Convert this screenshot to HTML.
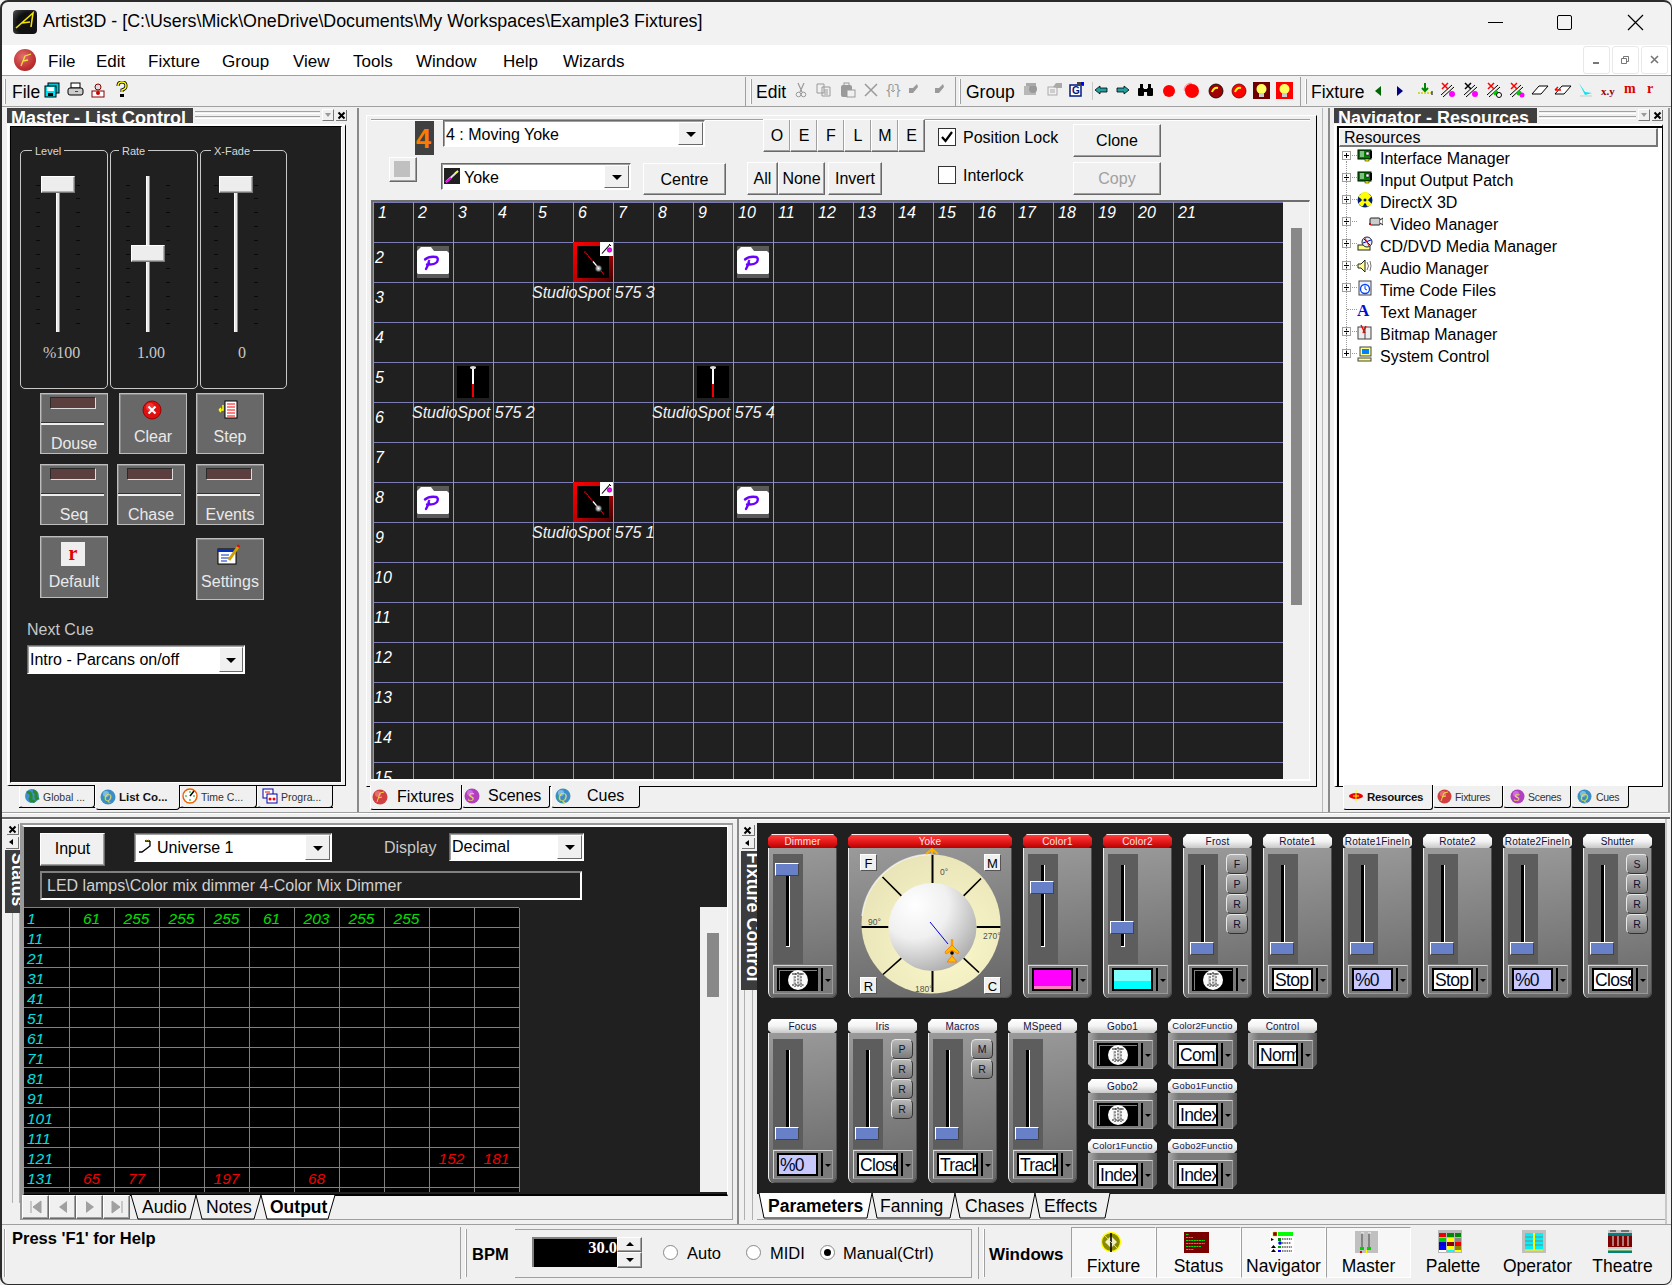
<!DOCTYPE html>
<html><head><meta charset="utf-8">
<style>
*{box-sizing:border-box;margin:0;padding:0}
html,body{width:1672px;height:1285px;overflow:hidden;background:#f0f0f0;font-family:"Liberation Sans",sans-serif;color:#000}
.a{position:absolute}
.t{position:absolute;white-space:nowrap;line-height:1}
.dk{background:#202020}
.sunk{border-top:1px solid #a0a0a0;border-left:1px solid #a0a0a0;border-bottom:1px solid #fff;border-right:1px solid #fff}
.btn{position:absolute;background:#f0f0f0;border-top:1px solid #fff;border-left:1px solid #fff;border-right:1px solid #696969;border-bottom:1px solid #696969;box-shadow:inset -1px -1px 0 #a0a0a0}
.combo{position:absolute;background:#fff;border-top:1px solid #696969;border-left:1px solid #696969;border-bottom:1px solid #fff;border-right:1px solid #fff;box-shadow:inset 1px 1px 0 #a0a0a0}
.cbtn{position:absolute;top:1px;bottom:1px;right:1px;width:17px;background:#f0f0f0;border-top:1px solid #fff;border-left:1px solid #fff;border-right:1px solid #696969;border-bottom:1px solid #696969}
.cbtn:after{content:"";position:absolute;left:50%;top:50%;margin-left:-5px;margin-top:-2px;border-left:5px solid transparent;border-right:5px solid transparent;border-top:5px solid #000}
.ptitle{position:absolute;background:#3f3f3f;color:#fff;font-weight:bold;font-size:17px;overflow:hidden;height:15px;line-height:20px;padding-left:4px}
</style></head><body>
<!-- window border -->
<div class="a" style="left:0;top:0;width:1672px;height:1285px;border:2px solid #2b2b2b;border-right-width:1px;border-bottom-width:1px;border-radius:8px 8px 8px 8px;pointer-events:none;z-index:50"></div>

<!-- TITLE BAR -->
<div class="a" id="titlebar" style="left:0;top:0;width:1672px;height:45px;background:#f2f2f2">
 <div class="a" style="left:13px;top:10px;width:24px;height:24px;border-radius:4px;background:radial-gradient(circle at 65% 60%,#111 55%,#555 100%)"></div>
 <svg class="a" style="left:13px;top:10px" width="24" height="24"><path d="M3 18 L20 3 L18 17 M9 13 L17 12" stroke="#f5e400" stroke-width="1.6" fill="none"/></svg>
 <div class="t" style="left:43px;top:13px;font-size:17.84px;color:#000">Artist3D - [C:\Users\Mick\OneDrive\Documents\My Workspaces\Example3 Fixtures]</div>
 <div class="a" style="left:1488px;top:22px;width:15px;height:1px;background:#000"></div>
 <div class="a" style="left:1557px;top:15px;width:15px;height:15px;border:1.5px solid #000;border-radius:2px"></div>
 <svg class="a" style="left:1627px;top:14px" width="17" height="17"><path d="M1 1 L16 16 M16 1 L1 16" stroke="#000" stroke-width="1.2"/></svg>
</div>

<!-- MENU BAR -->
<div class="a" id="menubar" style="left:0;top:45px;width:1672px;height:31px;background:#fff;border-bottom:1px solid #a0a0a0">
 <div class="a" style="left:14px;top:4px;width:22px;height:22px;border-radius:50%;background:radial-gradient(circle at 40% 35%,#e07070,#c03030 60%,#902020)"></div>
 <svg class="a" style="left:14px;top:4px" width="22" height="22"><path d="M7 17 L11 7 L17 5 M9 12 L14 11" stroke="#f0e040" stroke-width="1.3" fill="none"/></svg>
 <div class="t" style="left:48px;top:8px;font-size:17px">File</div>
 <div class="t" style="left:96px;top:8px;font-size:17px">Edit</div>
 <div class="t" style="left:148px;top:8px;font-size:17px">Fixture</div>
 <div class="t" style="left:222px;top:8px;font-size:17px">Group</div>
 <div class="t" style="left:293px;top:8px;font-size:17px">View</div>
 <div class="t" style="left:353px;top:8px;font-size:17px">Tools</div>
 <div class="t" style="left:416px;top:8px;font-size:17px">Window</div>
 <div class="t" style="left:503px;top:8px;font-size:17px">Help</div>
 <div class="t" style="left:563px;top:8px;font-size:17px">Wizards</div>
 <div class="a" style="left:1583px;top:1px;width:27px;height:28px;border:1px solid #e8e8e8;border-radius:3px"></div>
 <div class="a" style="left:1612px;top:1px;width:27px;height:28px;border:1px solid #e8e8e8;border-radius:3px"></div>
 <div class="a" style="left:1641px;top:1px;width:27px;height:28px;border:1px solid #e8e8e8;border-radius:3px"></div>
 <div class="a" style="left:1593px;top:17px;width:6px;height:2px;background:#777"></div>
 <svg class="a" style="left:1620px;top:10px" width="10" height="10"><path d="M1.5 3.5h5v5h-5z M3.5 3.5v-2h5v5h-2" stroke="#777" fill="none"/></svg>
 <svg class="a" style="left:1650px;top:10px" width="10" height="10"><path d="M1 1L8 8M8 1L1 8" stroke="#777" stroke-width="1.6"/></svg>
</div>

<!-- TOOLBAR -->
<div class="a" id="toolbar" style="left:0;top:76px;width:1672px;height:31px;background:#f0f0f0;border-bottom:1px solid #a0a0a0">
 <div class="a" style="left:4px;top:3px;width:2px;height:25px;border-left:1px solid #fff;border-right:1px solid #a0a0a0"></div>
 <div class="t" style="left:12px;top:8px;font-size:17.5px">File</div>
 <svg class="a" style="left:44px;top:6px" width="16" height="16"><rect x="4" y="1" width="11" height="10" fill="#00c8d8" stroke="#000"/><rect x="1" y="4" width="11" height="11" fill="#00e0f0" stroke="#000"/><rect x="3" y="5" width="7" height="4" fill="#fff"/><rect x="4" y="11" width="5" height="3" fill="#000"/></svg>
 <svg class="a" style="left:67px;top:6px" width="17" height="15"><rect x="4" y="1" width="9" height="5" fill="#fff" stroke="#000"/><rect x="1" y="6" width="15" height="7" rx="2" fill="#ccc" stroke="#000"/><rect x="8" y="9" width="3" height="1" fill="#e00"/></svg>
 <svg class="a" style="left:91px;top:6px" width="14" height="16"><circle cx="7" cy="5" r="3" fill="#ddd" stroke="#800"/><rect x="1" y="9" width="12" height="6" fill="#fff" stroke="#800"/><circle cx="7" cy="11" r="2" fill="#c00"/></svg>
 <svg class="a" style="left:115px;top:5px" width="13" height="17"><path d="M3 5 Q3 1 7 1 Q11 1 11 5 Q11 8 7 9 L7 11" stroke="#000" stroke-width="3" fill="none"/><path d="M3 5 Q3 1 7 1 Q11 1 11 5 Q11 8 7 9 L7 11" stroke="#ff0" stroke-width="1.5" fill="none"/><rect x="5" y="13" width="4" height="3" fill="#000"/></svg>

 <div class="a" style="left:745px;top:1px;width:1px;height:29px;background:#a0a0a0"></div>
 <div class="a" style="left:750px;top:3px;width:2px;height:25px;border-left:1px solid #fff;border-right:1px solid #a0a0a0"></div>
 <div class="t" style="left:756px;top:8px;font-size:17.5px">Edit</div>
 <svg class="a" style="left:795px;top:6px" width="12" height="16"><path d="M3 1 L7 10 M9 1 L5 10" stroke="#9a9a9a" stroke-width="1.2"/><circle cx="3.5" cy="12.5" r="2.3" stroke="#9a9a9a" fill="none"/><circle cx="8.5" cy="12.5" r="2.3" stroke="#9a9a9a" fill="none"/></svg>
 <svg class="a" style="left:816px;top:7px" width="16" height="14"><path d="M1 1h7v9h-7z M6 4h8v9h-8z" stroke="#9a9a9a" fill="#f0f0f0"/><path d="M8 7h4M8 9h4M8 11h4" stroke="#9a9a9a"/></svg>
 <svg class="a" style="left:840px;top:6px" width="16" height="16"><rect x="1" y="3" width="11" height="12" rx="2" fill="#9a9a9a"/><rect x="4" y="1" width="5" height="3" fill="none" stroke="#9a9a9a"/><rect x="7" y="8" width="8" height="7" fill="#f0f0f0" stroke="#9a9a9a"/></svg>
 <svg class="a" style="left:864px;top:7px" width="14" height="14"><path d="M1 1L13 13M13 1L1 13" stroke="#9a9a9a" stroke-width="1.5"/></svg>
 <svg class="a" style="left:885px;top:6px" width="16" height="15"><text x="0" y="13" font-size="14" fill="#9a9a9a" font-family="Liberation Mono">{}</text><path d="M8 3v7M6 8l2 2 2-2" stroke="#9a9a9a" fill="none"/></svg>
 <svg class="a" style="left:907px;top:7px" width="12" height="12"><path d="M2 10 L2 5 L6 5 L10 1 L11 4 L6 10z" fill="#9a9a9a"/></svg>
 <svg class="a" style="left:933px;top:7px" width="12" height="12"><path d="M2 10 L2 5 L6 5 L10 1 L11 4 L6 10z" fill="#9a9a9a"/></svg>

 <div class="a" style="left:955px;top:1px;width:1px;height:29px;background:#a0a0a0"></div>
 <div class="a" style="left:959px;top:3px;width:2px;height:25px;border-left:1px solid #fff;border-right:1px solid #a0a0a0"></div>
 <div class="t" style="left:966px;top:8px;font-size:17.5px">Group</div>
 <svg class="a" style="left:1023px;top:6px" width="16" height="14"><rect x="1" y="4" width="12" height="9" fill="#b8b8b8"/><circle cx="10" cy="7" r="4" fill="#999"/><rect x="3" y="1" width="10" height="3" fill="#aaa"/></svg>
 <svg class="a" style="left:1047px;top:6px" width="16" height="14"><rect x="1" y="5" width="9" height="8" fill="#f0f0f0" stroke="#aaa"/><path d="M6 5 L9 1 L15 1 L15 6 L10 6" fill="#aaa"/><path d="M3 8h5M3 10h5" stroke="#aaa"/></svg>
 <svg class="a" style="left:1069px;top:5px" width="16" height="16"><rect x="1" y="4" width="11" height="11" fill="#fff" stroke="#001a80" stroke-width="1.5"/><text x="3" y="13" font-size="10" font-weight="bold" fill="#001a80" font-family="Liberation Sans">G</text><rect x="8" y="1" width="7" height="4" fill="#444"/><rect x="12" y="1" width="3" height="3" fill="#00f"/></svg>
 <div class="a" style="left:1092px;top:6px;width:1px;height:18px;background:#c8c8c8"></div>
 <svg class="a" style="left:1094px;top:9px" width="14" height="10"><path d="M1 5 L6 1 L6 3 L13 3 L13 7 L6 7 L6 9z" fill="#20a0a0" stroke="#000" stroke-width="0.8"/></svg>
 <svg class="a" style="left:1116px;top:9px" width="14" height="10"><path d="M13 5 L8 1 L8 3 L1 3 L1 7 L8 7 L8 9z" fill="#20a0a0" stroke="#000" stroke-width="0.8"/></svg>
 <svg class="a" style="left:1137px;top:7px" width="17" height="14"><rect x="1" y="5" width="6" height="8" rx="1" fill="#000"/><rect x="10" y="5" width="6" height="8" rx="1" fill="#000"/><rect x="3" y="1" width="3" height="5" fill="#000"/><rect x="11" y="1" width="3" height="5" fill="#000"/><rect x="6" y="6" width="5" height="3" fill="#000"/></svg>
 <svg class="a" style="left:1162px;top:8px" width="14" height="14"><circle cx="7" cy="7" r="6" fill="#f00"/></svg>
 <svg class="a" style="left:1183px;top:6px" width="17" height="17"><circle cx="9" cy="9" r="7" fill="#f00"/><path d="M2 9 A7 7 0 0 1 9 2" stroke="#f00" fill="none"/><path d="M1 8 A8 8 0 0 1 8 1" stroke="#f88" fill="none"/></svg>
 <svg class="a" style="left:1208px;top:7px" width="16" height="16"><circle cx="8" cy="8" r="7" fill="#a00000" stroke="#000" stroke-width="0.8"/><path d="M4 9 Q6 4 10 5" stroke="#ff0" stroke-width="2" fill="none"/></svg>
 <svg class="a" style="left:1231px;top:7px" width="16" height="16"><circle cx="8" cy="8" r="7" fill="#f00" stroke="#600" stroke-width="0.8"/><path d="M4 9 Q6 4 10 5" stroke="#ff0" stroke-width="2" fill="none"/></svg>
 <svg class="a" style="left:1253px;top:6px" width="17" height="17"><rect width="17" height="17" fill="#700000"/><circle cx="8.5" cy="7" r="5" fill="#ffff60"/><rect x="6" y="11" width="5" height="4" fill="#ccc"/></svg>
 <svg class="a" style="left:1276px;top:6px" width="17" height="17"><rect width="17" height="17" fill="#f00"/><circle cx="8.5" cy="7" r="5" fill="#ffff60"/><rect x="6" y="11" width="5" height="4" fill="#ccc"/></svg>

 <div class="a" style="left:1300px;top:1px;width:1px;height:29px;background:#a0a0a0"></div>
 <div class="a" style="left:1305px;top:3px;width:2px;height:25px;border-left:1px solid #fff;border-right:1px solid #a0a0a0"></div>
 <div class="t" style="left:1311px;top:8px;font-size:17.5px">Fixture</div>
 <svg class="a" style="left:1374px;top:9px" width="8" height="12"><path d="M7 1 L1 6 L7 11z" fill="#006600"/></svg>
 <svg class="a" style="left:1396px;top:9px" width="8" height="12"><path d="M1 1 L7 6 L1 11z" fill="#000080"/></svg>
 <svg class="a" style="left:1417px;top:6px" width="16" height="16"><path d="M8 1v8M5 6l3 3 3-3" stroke="#080" stroke-width="2" fill="none"/><path d="M1 11h14" stroke="#cc0" stroke-dasharray="2 1" stroke-width="1.5"/><path d="M15 9v4" stroke="#000"/></svg>
 <svg class="a" style="left:1440px;top:6px" width="16" height="16"><path d="M1 13L12 3M3 15L14 5" stroke="#000"/><path d="M2 1L8 7M8 1L2 7" stroke="#f00" stroke-width="1.5"/><circle cx="12" cy="12" r="3" fill="#f0f"/></svg>
 <svg class="a" style="left:1463px;top:6px" width="16" height="16"><path d="M1 13L12 3M3 15L14 5" stroke="#000"/><path d="M2 1L8 7M8 1L2 7" stroke="#000" stroke-width="1.5"/><circle cx="12" cy="12" r="3" fill="#f0f"/></svg>
 <svg class="a" style="left:1486px;top:6px" width="16" height="16"><path d="M1 13L12 3M3 15L14 5" stroke="#000"/><path d="M2 1L8 7M8 1L2 7" stroke="#f00" stroke-width="1.5"/><circle cx="10" cy="11" r="2.5" fill="#0c0"/><circle cx="13" cy="13" r="2.5" fill="#fff" stroke="#000"/></svg>
 <svg class="a" style="left:1509px;top:6px" width="16" height="16"><path d="M1 13L12 3M3 15L14 5" stroke="#000"/><path d="M2 1L8 7M8 1L2 7" stroke="#f00" stroke-width="1.5"/><circle cx="10" cy="11" r="2.5" fill="#0c0"/><circle cx="13" cy="13" r="2.5" fill="#f0f"/></svg>
 <svg class="a" style="left:1531px;top:8px" width="18" height="12"><path d="M1 10 L8 2 L17 2 L10 10z" fill="#fff" stroke="#000"/></svg>
 <svg class="a" style="left:1554px;top:8px" width="18" height="12"><path d="M1 10 L8 2 L17 2 L10 10z" fill="#fff" stroke="#000"/><path d="M1 6h6M1 6l3-3" stroke="#f00" stroke-width="1.5"/></svg>
 <svg class="a" style="left:1578px;top:6px" width="15" height="16"><path d="M1 1 L7 10 L14 11 L7 13z" fill="#00e8f0"/><rect x="2" y="13" width="12" height="2" fill="#ddd"/></svg>
 <div class="t" style="left:1601px;top:10px;font-size:11px;font-weight:bold;color:#900;font-family:'Liberation Serif'">x.y</div>
 <div class="t" style="left:1624px;top:6px;font-size:14px;font-weight:bold;color:#d00;font-family:'Liberation Serif'">m</div>
 <div class="t" style="left:1647px;top:6px;font-size:14px;font-weight:bold;color:#d00;font-family:'Liberation Serif'">r</div>
</div>

<!-- LEFT PANEL -->
<div class="ptitle" style="left:7px;top:108px;width:186px;font-size:18px">Master - List Control</div>
<div class="a" style="left:195px;top:111px;width:125px;height:3px;border-top:1px solid #a0a0a0;border-bottom:1px solid #fff"></div>
<div class="a" style="left:195px;top:116px;width:125px;height:3px;border-top:1px solid #a0a0a0;border-bottom:1px solid #fff"></div>
<div class="a" style="left:322px;top:109px;width:12px;height:12px;background:#f0f0f0;border-top:1px solid #fff;border-left:1px solid #fff;border-right:1px solid #777;border-bottom:1px solid #777"><div class="a" style="left:2px;top:3px;border-left:3px solid transparent;border-right:3px solid transparent;border-top:4px solid #999"></div></div>
<div class="a" style="left:336px;top:110px;width:11px;height:11px;background:#f0f0f0;border-right:1px solid #777;border-bottom:1px solid #777"><svg class="a" style="left:1px;top:1px" width="9" height="9"><path d="M1.5 1.5L7.5 7.5M7.5 1.5L1.5 7.5" stroke="#000" stroke-width="2"/></svg></div>
<div class="a" style="left:7px;top:124px;width:339px;height:662px;border-top:2px solid #fff;border-left:2px solid #fff;border-right:1px solid #000;border-bottom:1px solid #000"></div>
<div class="a dk" style="left:10px;top:126px;width:332px;height:657px;border-top:1px solid #000;border-left:1px solid #000;border-right:1px solid #fff;border-bottom:1px solid #fff"></div>
<div class="a" style="left:20px;top:150px;width:88px;height:239px;border:1px solid #c8c8c8;border-radius:5px"></div>
 <div class="t" style="left:32px;top:144px;padding:0 3px;background:#202020;font-size:11px;color:#d8d8d8;line-height:14px">Level</div>
<div class="a" style="left:110px;top:150px;width:88px;height:239px;border:1px solid #c8c8c8;border-radius:5px"></div>
 <div class="t" style="left:119px;top:144px;padding:0 3px;background:#202020;font-size:11px;color:#d8d8d8;line-height:14px">Rate</div>
<div class="a" style="left:200px;top:150px;width:87px;height:239px;border:1px solid #c8c8c8;border-radius:5px"></div>
 <div class="t" style="left:211px;top:144px;padding:0 3px;background:#202020;font-size:11px;color:#d8d8d8;line-height:14px">X-Fade</div>
<div class="a" style="left:36px;top:185px;width:4px;height:1px;background:#0a0a0a"></div><div class="a" style="left:76px;top:185px;width:4px;height:1px;background:#0a0a0a"></div><div class="a" style="left:36px;top:198px;width:4px;height:1px;background:#0a0a0a"></div><div class="a" style="left:76px;top:198px;width:4px;height:1px;background:#0a0a0a"></div><div class="a" style="left:36px;top:212px;width:4px;height:1px;background:#0a0a0a"></div><div class="a" style="left:76px;top:212px;width:4px;height:1px;background:#0a0a0a"></div><div class="a" style="left:36px;top:226px;width:4px;height:1px;background:#0a0a0a"></div><div class="a" style="left:76px;top:226px;width:4px;height:1px;background:#0a0a0a"></div><div class="a" style="left:36px;top:240px;width:4px;height:1px;background:#0a0a0a"></div><div class="a" style="left:76px;top:240px;width:4px;height:1px;background:#0a0a0a"></div><div class="a" style="left:36px;top:254px;width:4px;height:1px;background:#0a0a0a"></div><div class="a" style="left:76px;top:254px;width:4px;height:1px;background:#0a0a0a"></div><div class="a" style="left:36px;top:268px;width:4px;height:1px;background:#0a0a0a"></div><div class="a" style="left:76px;top:268px;width:4px;height:1px;background:#0a0a0a"></div><div class="a" style="left:36px;top:282px;width:4px;height:1px;background:#0a0a0a"></div><div class="a" style="left:76px;top:282px;width:4px;height:1px;background:#0a0a0a"></div><div class="a" style="left:36px;top:296px;width:4px;height:1px;background:#0a0a0a"></div><div class="a" style="left:76px;top:296px;width:4px;height:1px;background:#0a0a0a"></div><div class="a" style="left:36px;top:309px;width:4px;height:1px;background:#0a0a0a"></div><div class="a" style="left:76px;top:309px;width:4px;height:1px;background:#0a0a0a"></div><div class="a" style="left:36px;top:323px;width:4px;height:1px;background:#0a0a0a"></div><div class="a" style="left:76px;top:323px;width:4px;height:1px;background:#0a0a0a"></div><div class="a" style="left:126px;top:185px;width:4px;height:1px;background:#0a0a0a"></div><div class="a" style="left:166px;top:185px;width:4px;height:1px;background:#0a0a0a"></div><div class="a" style="left:126px;top:198px;width:4px;height:1px;background:#0a0a0a"></div><div class="a" style="left:166px;top:198px;width:4px;height:1px;background:#0a0a0a"></div><div class="a" style="left:126px;top:212px;width:4px;height:1px;background:#0a0a0a"></div><div class="a" style="left:166px;top:212px;width:4px;height:1px;background:#0a0a0a"></div><div class="a" style="left:126px;top:226px;width:4px;height:1px;background:#0a0a0a"></div><div class="a" style="left:166px;top:226px;width:4px;height:1px;background:#0a0a0a"></div><div class="a" style="left:126px;top:240px;width:4px;height:1px;background:#0a0a0a"></div><div class="a" style="left:166px;top:240px;width:4px;height:1px;background:#0a0a0a"></div><div class="a" style="left:126px;top:254px;width:4px;height:1px;background:#0a0a0a"></div><div class="a" style="left:166px;top:254px;width:4px;height:1px;background:#0a0a0a"></div><div class="a" style="left:126px;top:268px;width:4px;height:1px;background:#0a0a0a"></div><div class="a" style="left:166px;top:268px;width:4px;height:1px;background:#0a0a0a"></div><div class="a" style="left:126px;top:282px;width:4px;height:1px;background:#0a0a0a"></div><div class="a" style="left:166px;top:282px;width:4px;height:1px;background:#0a0a0a"></div><div class="a" style="left:126px;top:296px;width:4px;height:1px;background:#0a0a0a"></div><div class="a" style="left:166px;top:296px;width:4px;height:1px;background:#0a0a0a"></div><div class="a" style="left:126px;top:309px;width:4px;height:1px;background:#0a0a0a"></div><div class="a" style="left:166px;top:309px;width:4px;height:1px;background:#0a0a0a"></div><div class="a" style="left:126px;top:323px;width:4px;height:1px;background:#0a0a0a"></div><div class="a" style="left:166px;top:323px;width:4px;height:1px;background:#0a0a0a"></div><div class="a" style="left:214px;top:185px;width:4px;height:1px;background:#0a0a0a"></div><div class="a" style="left:254px;top:185px;width:4px;height:1px;background:#0a0a0a"></div><div class="a" style="left:214px;top:198px;width:4px;height:1px;background:#0a0a0a"></div><div class="a" style="left:254px;top:198px;width:4px;height:1px;background:#0a0a0a"></div><div class="a" style="left:214px;top:212px;width:4px;height:1px;background:#0a0a0a"></div><div class="a" style="left:254px;top:212px;width:4px;height:1px;background:#0a0a0a"></div><div class="a" style="left:214px;top:226px;width:4px;height:1px;background:#0a0a0a"></div><div class="a" style="left:254px;top:226px;width:4px;height:1px;background:#0a0a0a"></div><div class="a" style="left:214px;top:240px;width:4px;height:1px;background:#0a0a0a"></div><div class="a" style="left:254px;top:240px;width:4px;height:1px;background:#0a0a0a"></div><div class="a" style="left:214px;top:254px;width:4px;height:1px;background:#0a0a0a"></div><div class="a" style="left:254px;top:254px;width:4px;height:1px;background:#0a0a0a"></div><div class="a" style="left:214px;top:268px;width:4px;height:1px;background:#0a0a0a"></div><div class="a" style="left:254px;top:268px;width:4px;height:1px;background:#0a0a0a"></div><div class="a" style="left:214px;top:282px;width:4px;height:1px;background:#0a0a0a"></div><div class="a" style="left:254px;top:282px;width:4px;height:1px;background:#0a0a0a"></div><div class="a" style="left:214px;top:296px;width:4px;height:1px;background:#0a0a0a"></div><div class="a" style="left:254px;top:296px;width:4px;height:1px;background:#0a0a0a"></div><div class="a" style="left:214px;top:309px;width:4px;height:1px;background:#0a0a0a"></div><div class="a" style="left:254px;top:309px;width:4px;height:1px;background:#0a0a0a"></div><div class="a" style="left:214px;top:323px;width:4px;height:1px;background:#0a0a0a"></div><div class="a" style="left:254px;top:323px;width:4px;height:1px;background:#0a0a0a"></div>
<div class="a" style="left:56px;top:176px;width:4px;height:156px;background:#e8e8e8;border-left:1px solid #fff;border-right:1px solid #888"></div>
 <div class="a" style="left:41px;top:176px;width:34px;height:17px;background:#ededed;border-top:1px solid #fff;border-left:1px solid #fff;border-right:1px solid #777;border-bottom:1px solid #777;box-shadow:inset -1px -1px 0 #b0b0b0"></div>
<div class="a" style="left:146px;top:176px;width:4px;height:156px;background:#e8e8e8;border-left:1px solid #fff;border-right:1px solid #888"></div>
 <div class="a" style="left:131px;top:245px;width:34px;height:17px;background:#ededed;border-top:1px solid #fff;border-left:1px solid #fff;border-right:1px solid #777;border-bottom:1px solid #777;box-shadow:inset -1px -1px 0 #b0b0b0"></div>
<div class="a" style="left:234px;top:176px;width:4px;height:156px;background:#e8e8e8;border-left:1px solid #fff;border-right:1px solid #888"></div>
 <div class="a" style="left:219px;top:176px;width:34px;height:17px;background:#ededed;border-top:1px solid #fff;border-left:1px solid #fff;border-right:1px solid #777;border-bottom:1px solid #777;box-shadow:inset -1px -1px 0 #b0b0b0"></div>
<div class="t" style="left:43px;top:345px;font-size:16px;color:#c8c8c8;font-family:'Liberation Serif'">%100</div>
<div class="t" style="left:137px;top:345px;font-size:16px;color:#c8c8c8;font-family:'Liberation Serif'">1.00</div>
<div class="t" style="left:238px;top:345px;font-size:16px;color:#c8c8c8;font-family:'Liberation Serif'">0</div>
<div class="a" style="left:40px;top:393px;width:68px;height:61px;background:#686868;border:1px solid #bdbdbd;box-shadow:inset 1px 1px 0 #8a8a8a"><div class="a" style="left:9px;top:3px;width:46px;height:12px;background:#5b3e3e;border-top:1px solid #2a2a2a;border-left:1px solid #2a2a2a;border-right:1px solid #ddd;border-bottom:1px solid #ddd"></div><div class="a" style="left:0;top:28px;width:63px;height:3px;border-top:1px solid #333;border-bottom:2px solid #eee"></div>
  <div class="t" style="left:0;width:66px;text-align:center;top:42px;font-size:16px;color:#eaeaea">Douse</div></div>
<div class="a" style="left:119px;top:393px;width:68px;height:61px;background:#686868;border:1px solid #bdbdbd;box-shadow:inset 1px 1px 0 #8a8a8a"><svg class="a" style="left:22px;top:6px" width="20" height="20"><circle cx="10" cy="10" r="9" fill="#e01010" stroke="#900"/><circle cx="8" cy="7" r="4" fill="#ff6060" opacity=".5"/><path d="M6.5 6.5L13.5 13.5M13.5 6.5L6.5 13.5" stroke="#fff" stroke-width="2.2"/></svg>
  <div class="t" style="left:0;width:66px;text-align:center;top:35px;font-size:16px;color:#eaeaea">Clear</div></div>
<div class="a" style="left:196px;top:393px;width:68px;height:61px;background:#686868;border:1px solid #bdbdbd;box-shadow:inset 1px 1px 0 #8a8a8a"><svg class="a" style="left:20px;top:6px" width="24" height="20"><rect x="8" y="1" width="12" height="17" fill="#fff" stroke="#000"/><path d="M10 4h8M10 7h8M10 10h8M10 13h8M10 16h8" stroke="#f00"/><path d="M6 5v5H2M2 10l2-2M2 10l2 2" stroke="#ff0" stroke-width="1.5" fill="none"/></svg>
  <div class="t" style="left:0;width:66px;text-align:center;top:35px;font-size:16px;color:#eaeaea">Step</div></div>
<div class="a" style="left:40px;top:464px;width:68px;height:61px;background:#686868;border:1px solid #bdbdbd;box-shadow:inset 1px 1px 0 #8a8a8a"><div class="a" style="left:9px;top:3px;width:46px;height:12px;background:#5b3e3e;border-top:1px solid #2a2a2a;border-left:1px solid #2a2a2a;border-right:1px solid #ddd;border-bottom:1px solid #ddd"></div><div class="a" style="left:0;top:28px;width:63px;height:3px;border-top:1px solid #333;border-bottom:2px solid #eee"></div>
  <div class="t" style="left:0;width:66px;text-align:center;top:42px;font-size:16px;color:#eaeaea">Seq</div></div>
<div class="a" style="left:117px;top:464px;width:68px;height:61px;background:#686868;border:1px solid #bdbdbd;box-shadow:inset 1px 1px 0 #8a8a8a"><div class="a" style="left:9px;top:3px;width:46px;height:12px;background:#5b3e3e;border-top:1px solid #2a2a2a;border-left:1px solid #2a2a2a;border-right:1px solid #ddd;border-bottom:1px solid #ddd"></div><div class="a" style="left:0;top:28px;width:63px;height:3px;border-top:1px solid #333;border-bottom:2px solid #eee"></div>
  <div class="t" style="left:0;width:66px;text-align:center;top:42px;font-size:16px;color:#eaeaea">Chase</div></div>
<div class="a" style="left:196px;top:464px;width:68px;height:61px;background:#686868;border:1px solid #bdbdbd;box-shadow:inset 1px 1px 0 #8a8a8a"><div class="a" style="left:9px;top:3px;width:46px;height:12px;background:#5b3e3e;border-top:1px solid #2a2a2a;border-left:1px solid #2a2a2a;border-right:1px solid #ddd;border-bottom:1px solid #ddd"></div><div class="a" style="left:0;top:28px;width:63px;height:3px;border-top:1px solid #333;border-bottom:2px solid #eee"></div>
  <div class="t" style="left:0;width:66px;text-align:center;top:42px;font-size:16px;color:#eaeaea">Events</div></div>
<div class="a" style="left:40px;top:536px;width:68px;height:62px;background:#686868;border:1px solid #bdbdbd;box-shadow:inset 1px 1px 0 #8a8a8a"><div class="a" style="left:20px;top:5px;width:24px;height:24px;background:#eee"></div><div class="t" style="left:20px;width:24px;text-align:center;top:6px;font-family:'Liberation Serif';font-weight:bold;font-size:20px;color:#e00000">r</div>
  <div class="t" style="left:0;width:66px;text-align:center;top:37px;font-size:16px;color:#eaeaea">Default</div></div>
<div class="a" style="left:196px;top:538px;width:68px;height:62px;background:#686868;border:1px solid #bdbdbd;box-shadow:inset 1px 1px 0 #8a8a8a"><svg class="a" style="left:20px;top:5px" width="24" height="22"><rect x="1" y="5" width="18" height="15" fill="#fff" stroke="#000"/><rect x="1" y="5" width="18" height="3" fill="#0030c0"/><path d="M4 11h8M4 14h10M4 17h6" stroke="#0030c0"/><path d="M12 16L21 3" stroke="#d0a000" stroke-width="3"/><path d="M21 3l1-2" stroke="#f00" stroke-width="3"/></svg>
  <div class="t" style="left:0;width:66px;text-align:center;top:35px;font-size:16px;color:#eaeaea">Settings</div></div>
<div class="t" style="left:27px;top:622px;font-size:16px;color:#c8c8c8">Next Cue</div>
<div class="combo" style="left:27px;top:645px;width:218px;height:29px"><div class="t" style="left:2px;top:6px;font-size:16px">Intro - Parcans on/off</div><div class="cbtn" style="width:24px"></div></div>
<!-- left tabs -->
<div class="a" style="left:19px;top:785px;width:314px;height:23px;border-bottom:1px solid #000"></div>
<div class="a" style="left:19px;top:786px;width:76px;height:22px;background:#f0f0f0;border-left:1px solid #fff;border-right:1px solid #000;border-bottom:1px solid #000;border-radius:0 0 4px 4px"></div>
<div class="a" style="left:180px;top:786px;width:77px;height:22px;background:#f0f0f0;border-left:1px solid #fff;border-right:1px solid #000;border-bottom:1px solid #000;border-radius:0 0 4px 4px"></div>
<div class="a" style="left:257px;top:786px;width:76px;height:22px;background:#f0f0f0;border-left:1px solid #fff;border-right:1px solid #000;border-bottom:1px solid #000;border-radius:0 0 4px 4px"></div>
<div class="a" style="left:95px;top:785px;width:85px;height:25px;background:#f0f0f0;border-left:1px solid #fff;border-right:1px solid #000;border-bottom:1px solid #000;border-radius:0 0 4px 4px"></div>
<svg class="a" style="left:24px;top:788px" width="16" height="16"><circle cx="8" cy="8" r="7" fill="#3a90d0"/><path d="M3 5q3-2 4 2t-2 5M9 3q4 1 3 5t3 2M6 13q3-1 5 1" stroke="#2a8a2a" stroke-width="3" fill="none"/></svg>
<div class="t" style="left:43px;top:792px;font-size:10.5px;color:#333">Global ...</div>
<svg class="a" style="left:100px;top:789px" width="16" height="16"><circle cx="8" cy="8" r="7.5" fill="#3a8ec8"/><circle cx="6" cy="5" r="3" fill="#9cd0f0" opacity=".7"/><text x="4" y="12" font-size="10" fill="#e8e040" font-style="italic" font-family="Liberation Serif">Q</text></svg>
<div class="t" style="left:119px;top:792px;font-size:11.5px;font-weight:bold;color:#111">List Co...</div>
<svg class="a" style="left:182px;top:788px" width="16" height="16"><circle cx="8" cy="8" r="7" fill="#fff" stroke="#f06000" stroke-width="1.4"/><path d="M8 3v10M3 8h10" stroke="#0a0" stroke-dasharray="2 6"/><path d="M8 8L12 3" stroke="#000" stroke-width="1.5"/></svg>
<div class="t" style="left:201px;top:792px;font-size:10.5px;color:#333">Time C...</div>
<svg class="a" style="left:262px;top:788px" width="16" height="16"><rect x="1" y="1" width="10" height="9" fill="#fff" stroke="#00a"/><rect x="5" y="6" width="10" height="9" fill="#fff" stroke="#00a"/><circle cx="8" cy="11" r="1.5" fill="#f00"/><circle cx="12" cy="11" r="1.5" fill="#f00"/><path d="M3 4h5" stroke="#f00"/></svg>
<div class="t" style="left:281px;top:792px;font-size:10.5px;color:#333">Progra...</div>


<!-- CENTER PANEL -->
<div class="a" style="left:357px;top:108px;width:2px;height:704px;background:#8a8a8a"></div>
<div class="a" style="left:366px;top:115px;width:951px;height:672px;border-top:1px solid #fff;border-left:1px solid #fff;border-right:1px solid #000;border-bottom:1px solid #000"></div>
<div class="a" style="left:371px;top:119px;width:939px;height:2px;border-top:1px solid #a0a0a0;border-bottom:1px solid #fff"></div>

<div class="a" style="left:415px;top:121px;width:19px;height:34px;background:#404040"></div>
<div class="t" style="left:416px;top:126px;font-size:27px;font-weight:bold;color:#ff7a00">4</div>
<div class="btn" style="left:389px;top:157px;width:28px;height:25px"><div class="a" style="left:4px;top:3px;width:16px;height:16px;background:#c0c0c0"></div></div>
<div class="combo" style="left:443px;top:120px;width:262px;height:27px"><div class="t" style="left:2px;top:6px;font-size:16px">4 : Moving Yoke</div><div class="cbtn" style="width:25px"></div></div>
<div class="combo" style="left:441px;top:163px;width:190px;height:27px"><div class="a" style="left:2px;top:4px;width:16px;height:16px;background:#202020"></div><svg class="a" style="left:2px;top:4px" width="16" height="16"><path d="M2 14 L14 3" stroke="#e0e0e0" stroke-width="2"/><path d="M2 14 L7 10" stroke="#f0f" stroke-width="2"/><path d="M11 5 L14 3" stroke="#ff0" stroke-width="1.5"/></svg><div class="t" style="left:22px;top:6px;font-size:16px">Yoke</div><div class="cbtn" style="width:25px"></div></div>
<div class="btn" style="left:643px;top:163px;width:83px;height:32px"><div class="t" style="left:0;width:81px;text-align:center;top:8px;font-size:16px;color:#000">Centre</div></div>
<div class="btn" style="left:763px;top:119px;width:28px;height:33px"><div class="t" style="left:0;width:26px;text-align:center;top:8px;font-size:16px;color:#000">O</div></div><div class="btn" style="left:790px;top:119px;width:28px;height:33px"><div class="t" style="left:0;width:26px;text-align:center;top:8px;font-size:16px;color:#000">E</div></div><div class="btn" style="left:817px;top:119px;width:28px;height:33px"><div class="t" style="left:0;width:26px;text-align:center;top:8px;font-size:16px;color:#000">F</div></div><div class="btn" style="left:844px;top:119px;width:28px;height:33px"><div class="t" style="left:0;width:26px;text-align:center;top:8px;font-size:16px;color:#000">L</div></div><div class="btn" style="left:871px;top:119px;width:28px;height:33px"><div class="t" style="left:0;width:26px;text-align:center;top:8px;font-size:16px;color:#000">M</div></div><div class="btn" style="left:898px;top:119px;width:27px;height:33px"><div class="t" style="left:0;width:25px;text-align:center;top:8px;font-size:16px;color:#000">E</div></div>
<div class="btn" style="left:747px;top:162px;width:31px;height:33px"><div class="t" style="left:0;width:29px;text-align:center;top:8px;font-size:16px;color:#000">All</div></div><div class="btn" style="left:778px;top:162px;width:47px;height:33px"><div class="t" style="left:0;width:45px;text-align:center;top:8px;font-size:16px;color:#000">None</div></div><div class="btn" style="left:828px;top:162px;width:54px;height:33px"><div class="t" style="left:0;width:52px;text-align:center;top:8px;font-size:16px;color:#000">Invert</div></div>
<div class="a" style="left:938px;top:128px;width:18px;height:18px;background:#fff;border:1px solid #333"><svg class="a" style="left:1px;top:1px" width="14" height="14"><path d="M2 7 L5.5 11 L12 2" stroke="#000" stroke-width="2.2" fill="none"/></svg></div>
<div class="t" style="left:963px;top:130px;font-size:16px">Position Lock</div>
<div class="a" style="left:938px;top:166px;width:18px;height:18px;background:#fff;border:1px solid #333"></div>
<div class="t" style="left:963px;top:168px;font-size:16px">Interlock</div>
<div class="btn" style="left:1073px;top:124px;width:88px;height:33px"><div class="t" style="left:0;width:86px;text-align:center;top:8px;font-size:16px;color:#000">Clone</div></div>
<div class="btn" style="left:1073px;top:162px;width:88px;height:33px"><div class="t" style="left:0;width:86px;text-align:center;top:8px;font-size:16px;color:#a0a0a0">Copy</div></div>
<!-- grid -->
<div class="a" style="left:371px;top:200px;width:912px;height:579px;border-top:2px solid #6e6e6e;border-left:2px solid #6e6e6e;background:#202020"></div>
<div class="a" style="left:0;top:0;width:1283px;height:779px;overflow:hidden">
<div class="a" style="left:373px;top:202px;width:910px;height:1px;background:#7c7cb4"></div><div class="a" style="left:373px;top:242px;width:910px;height:1px;background:#7c7cb4"></div><div class="a" style="left:373px;top:282px;width:910px;height:1px;background:#7c7cb4"></div><div class="a" style="left:373px;top:322px;width:910px;height:1px;background:#7c7cb4"></div><div class="a" style="left:373px;top:362px;width:910px;height:1px;background:#7c7cb4"></div><div class="a" style="left:373px;top:402px;width:910px;height:1px;background:#7c7cb4"></div><div class="a" style="left:373px;top:442px;width:910px;height:1px;background:#7c7cb4"></div><div class="a" style="left:373px;top:482px;width:910px;height:1px;background:#7c7cb4"></div><div class="a" style="left:373px;top:522px;width:910px;height:1px;background:#7c7cb4"></div><div class="a" style="left:373px;top:562px;width:910px;height:1px;background:#7c7cb4"></div><div class="a" style="left:373px;top:602px;width:910px;height:1px;background:#7c7cb4"></div><div class="a" style="left:373px;top:642px;width:910px;height:1px;background:#7c7cb4"></div><div class="a" style="left:373px;top:682px;width:910px;height:1px;background:#7c7cb4"></div><div class="a" style="left:373px;top:722px;width:910px;height:1px;background:#7c7cb4"></div><div class="a" style="left:373px;top:762px;width:910px;height:1px;background:#7c7cb4"></div><div class="a" style="left:373px;top:202px;width:1px;height:577px;background:#7aae7a"></div><div class="a" style="left:413px;top:202px;width:1px;height:577px;background:#7aae7a"></div><div class="a" style="left:453px;top:202px;width:1px;height:577px;background:#7aae7a"></div><div class="a" style="left:493px;top:202px;width:1px;height:577px;background:#7aae7a"></div><div class="a" style="left:533px;top:202px;width:1px;height:577px;background:#7aae7a"></div><div class="a" style="left:573px;top:202px;width:1px;height:577px;background:#7aae7a"></div><div class="a" style="left:613px;top:202px;width:1px;height:577px;background:#7aae7a"></div><div class="a" style="left:653px;top:202px;width:1px;height:577px;background:#7aae7a"></div><div class="a" style="left:693px;top:202px;width:1px;height:577px;background:#7aae7a"></div><div class="a" style="left:733px;top:202px;width:1px;height:577px;background:#7aae7a"></div><div class="a" style="left:773px;top:202px;width:1px;height:577px;background:#7aae7a"></div><div class="a" style="left:813px;top:202px;width:1px;height:577px;background:#7aae7a"></div><div class="a" style="left:853px;top:202px;width:1px;height:577px;background:#7aae7a"></div><div class="a" style="left:893px;top:202px;width:1px;height:577px;background:#7aae7a"></div><div class="a" style="left:933px;top:202px;width:1px;height:577px;background:#7aae7a"></div><div class="a" style="left:973px;top:202px;width:1px;height:577px;background:#7aae7a"></div><div class="a" style="left:1013px;top:202px;width:1px;height:577px;background:#7aae7a"></div><div class="a" style="left:1053px;top:202px;width:1px;height:577px;background:#7aae7a"></div><div class="a" style="left:1093px;top:202px;width:1px;height:577px;background:#7aae7a"></div><div class="a" style="left:1133px;top:202px;width:1px;height:577px;background:#7aae7a"></div><div class="a" style="left:1173px;top:202px;width:1px;height:577px;background:#7aae7a"></div><div class="t" style="left:378px;top:205px;font-size:16px;font-style:italic;color:#fff">1</div><div class="t" style="left:418px;top:205px;font-size:16px;font-style:italic;color:#fff">2</div><div class="t" style="left:458px;top:205px;font-size:16px;font-style:italic;color:#fff">3</div><div class="t" style="left:498px;top:205px;font-size:16px;font-style:italic;color:#fff">4</div><div class="t" style="left:538px;top:205px;font-size:16px;font-style:italic;color:#fff">5</div><div class="t" style="left:578px;top:205px;font-size:16px;font-style:italic;color:#fff">6</div><div class="t" style="left:618px;top:205px;font-size:16px;font-style:italic;color:#fff">7</div><div class="t" style="left:658px;top:205px;font-size:16px;font-style:italic;color:#fff">8</div><div class="t" style="left:698px;top:205px;font-size:16px;font-style:italic;color:#fff">9</div><div class="t" style="left:738px;top:205px;font-size:16px;font-style:italic;color:#fff">10</div><div class="t" style="left:778px;top:205px;font-size:16px;font-style:italic;color:#fff">11</div><div class="t" style="left:818px;top:205px;font-size:16px;font-style:italic;color:#fff">12</div><div class="t" style="left:858px;top:205px;font-size:16px;font-style:italic;color:#fff">13</div><div class="t" style="left:898px;top:205px;font-size:16px;font-style:italic;color:#fff">14</div><div class="t" style="left:938px;top:205px;font-size:16px;font-style:italic;color:#fff">15</div><div class="t" style="left:978px;top:205px;font-size:16px;font-style:italic;color:#fff">16</div><div class="t" style="left:1018px;top:205px;font-size:16px;font-style:italic;color:#fff">17</div><div class="t" style="left:1058px;top:205px;font-size:16px;font-style:italic;color:#fff">18</div><div class="t" style="left:1098px;top:205px;font-size:16px;font-style:italic;color:#fff">19</div><div class="t" style="left:1138px;top:205px;font-size:16px;font-style:italic;color:#fff">20</div><div class="t" style="left:1178px;top:205px;font-size:16px;font-style:italic;color:#fff">21</div><div class="t" style="left:375px;top:250px;font-size:16px;font-style:italic;color:#fff">2</div><div class="t" style="left:375px;top:290px;font-size:16px;font-style:italic;color:#fff">3</div><div class="t" style="left:375px;top:330px;font-size:16px;font-style:italic;color:#fff">4</div><div class="t" style="left:375px;top:370px;font-size:16px;font-style:italic;color:#fff">5</div><div class="t" style="left:375px;top:410px;font-size:16px;font-style:italic;color:#fff">6</div><div class="t" style="left:375px;top:450px;font-size:16px;font-style:italic;color:#fff">7</div><div class="t" style="left:375px;top:490px;font-size:16px;font-style:italic;color:#fff">8</div><div class="t" style="left:375px;top:530px;font-size:16px;font-style:italic;color:#fff">9</div><div class="t" style="left:374px;top:570px;font-size:16px;font-style:italic;color:#fff">10</div><div class="t" style="left:374px;top:610px;font-size:16px;font-style:italic;color:#fff">11</div><div class="t" style="left:374px;top:650px;font-size:16px;font-style:italic;color:#fff">12</div><div class="t" style="left:374px;top:690px;font-size:16px;font-style:italic;color:#fff">13</div><div class="t" style="left:374px;top:730px;font-size:16px;font-style:italic;color:#fff">14</div><div class="t" style="left:374px;top:770px;font-size:16px;font-style:italic;color:#fff">15</div>
<div class="a" style="left:417px;top:246px;width:32px;height:32px;background:#5a5a5a"></div>
<svg class="a" style="left:417px;top:246px" width="32" height="32"><path d="M0 5 L4 1 L14 1 L17 5 L30 5 L32 7 L32 27 L31 28 L1 28 L0 27z" fill="#fff"/><path d="M8 13.5 Q12 10 19 11 Q22 12 20 16 Q17 19 10 18.5 M12 17 L9 23" stroke="#6a00ff" stroke-width="2.4" fill="none" stroke-linecap="round"/><path d="M12.5 14 L11 17" stroke="#6a00ff" stroke-width="2"/></svg><div class="a" style="left:737px;top:246px;width:32px;height:32px;background:#5a5a5a"></div>
<svg class="a" style="left:737px;top:246px" width="32" height="32"><path d="M0 5 L4 1 L14 1 L17 5 L30 5 L32 7 L32 27 L31 28 L1 28 L0 27z" fill="#fff"/><path d="M8 13.5 Q12 10 19 11 Q22 12 20 16 Q17 19 10 18.5 M12 17 L9 23" stroke="#6a00ff" stroke-width="2.4" fill="none" stroke-linecap="round"/><path d="M12.5 14 L11 17" stroke="#6a00ff" stroke-width="2"/></svg><div class="a" style="left:417px;top:486px;width:32px;height:32px;background:#5a5a5a"></div>
<svg class="a" style="left:417px;top:486px" width="32" height="32"><path d="M0 5 L4 1 L14 1 L17 5 L30 5 L32 7 L32 27 L31 28 L1 28 L0 27z" fill="#fff"/><path d="M8 13.5 Q12 10 19 11 Q22 12 20 16 Q17 19 10 18.5 M12 17 L9 23" stroke="#6a00ff" stroke-width="2.4" fill="none" stroke-linecap="round"/><path d="M12.5 14 L11 17" stroke="#6a00ff" stroke-width="2"/></svg><div class="a" style="left:737px;top:486px;width:32px;height:32px;background:#5a5a5a"></div>
<svg class="a" style="left:737px;top:486px" width="32" height="32"><path d="M0 5 L4 1 L14 1 L17 5 L30 5 L32 7 L32 27 L31 28 L1 28 L0 27z" fill="#fff"/><path d="M8 13.5 Q12 10 19 11 Q22 12 20 16 Q17 19 10 18.5 M12 17 L9 23" stroke="#6a00ff" stroke-width="2.4" fill="none" stroke-linecap="round"/><path d="M12.5 14 L11 17" stroke="#6a00ff" stroke-width="2"/></svg>
<svg class="a" style="left:573px;top:242px" width="40" height="40"><defs><linearGradient id="sg573242" x1="0" y1="0" x2="1" y2="1"><stop offset="0" stop-color="#ff0000"/><stop offset=".5" stop-color="#c00000"/><stop offset="1" stop-color="#400000"/></linearGradient><radialGradient id="sg573242g"><stop offset="0" stop-color="#fff"/><stop offset=".5" stop-color="#aaa" stop-opacity=".8"/><stop offset="1" stop-color="#000" stop-opacity="0"/></radialGradient></defs><rect width="40" height="40" fill="url(#sg573242)"/><rect x="4" y="4" width="32" height="32" fill="#000"/><path d="M11.5 9.5 L20 19.5" stroke="#f00" stroke-width="1.2" stroke-dasharray="1.3 .5"/><path d="M20 19.5 L25.5 26" stroke="#fff" stroke-width="1.2"/><path d="M28 29 L31 32.5" stroke="#f00" stroke-width="1.2" stroke-dasharray="1.3 .5"/><circle cx="25.5" cy="26.5" r="4.5" fill="url(#sg573242g)"/><rect x="27" y="0" width="13" height="14" fill="#fff"/><path d="M29 11.5 L36.5 3" stroke="#000" stroke-width="1.1"/><path d="M36 2 L38 4" stroke="#000" stroke-width="1"/><circle cx="36.5" cy="8" r="2.3" fill="#ff00ff" stroke="#222" stroke-width=".5"/></svg><svg class="a" style="left:573px;top:482px" width="40" height="40"><defs><linearGradient id="sg573482" x1="0" y1="0" x2="1" y2="1"><stop offset="0" stop-color="#ff0000"/><stop offset=".5" stop-color="#c00000"/><stop offset="1" stop-color="#400000"/></linearGradient><radialGradient id="sg573482g"><stop offset="0" stop-color="#fff"/><stop offset=".5" stop-color="#aaa" stop-opacity=".8"/><stop offset="1" stop-color="#000" stop-opacity="0"/></radialGradient></defs><rect width="40" height="40" fill="url(#sg573482)"/><rect x="4" y="4" width="32" height="32" fill="#000"/><path d="M11.5 9.5 L20 19.5" stroke="#f00" stroke-width="1.2" stroke-dasharray="1.3 .5"/><path d="M20 19.5 L25.5 26" stroke="#fff" stroke-width="1.2"/><path d="M28 29 L31 32.5" stroke="#f00" stroke-width="1.2" stroke-dasharray="1.3 .5"/><circle cx="25.5" cy="26.5" r="4.5" fill="url(#sg573482g)"/><rect x="27" y="0" width="13" height="14" fill="#fff"/><path d="M29 11.5 L36.5 3" stroke="#000" stroke-width="1.1"/><path d="M36 2 L38 4" stroke="#000" stroke-width="1"/><circle cx="36.5" cy="8" r="2.3" fill="#ff00ff" stroke="#222" stroke-width=".5"/></svg>
<div class="a" style="left:457px;top:366px;width:32px;height:32px;background:#000"></div>
<div class="a" style="left:472px;top:368px;width:2px;height:16px;background:#fff"></div><div class="a" style="left:472px;top:384px;width:2px;height:13px;background:#e00"></div><div class="a" style="left:470px;top:366px;width:6px;height:3px;background:#ddd;border-radius:50%"></div><div class="a" style="left:697px;top:366px;width:32px;height:32px;background:#000"></div>
<div class="a" style="left:712px;top:368px;width:2px;height:16px;background:#fff"></div><div class="a" style="left:712px;top:384px;width:2px;height:13px;background:#e00"></div><div class="a" style="left:710px;top:366px;width:6px;height:3px;background:#ddd;border-radius:50%"></div>
<div class="t" style="left:532px;top:284px;font-size:16px;font-style:italic;color:#f0f0f0;margin-top:1px">StudioSpot 575 3</div><div class="t" style="left:412px;top:404px;font-size:16px;font-style:italic;color:#f0f0f0;margin-top:1px">StudioSpot 575 2</div><div class="t" style="left:652px;top:404px;font-size:16px;font-style:italic;color:#f0f0f0;margin-top:1px">StudioSpot 575 4</div><div class="t" style="left:532px;top:524px;font-size:16px;font-style:italic;color:#f0f0f0;margin-top:1px">StudioSpot 575 1</div>
</div>
<div class="a" style="left:1283px;top:200px;width:27px;height:580px;background:#f0f0f0;border-right:1px solid #fff;border-top:2px solid #6e6e6e"></div>
<div class="a" style="left:1291px;top:228px;width:11px;height:377px;background:#888"></div>
<div class="a" style="left:371px;top:779px;width:940px;height:2px;background:#fff"></div>
<!-- center tabs -->
<div class="a" style="left:462px;top:786px;width:88px;height:22px;background:#f0f0f0;border-left:1px solid #fff;border-right:1px solid #000;border-bottom:1px solid #000;border-radius:0 0 3px 3px"></div>
<div class="a" style="left:551px;top:786px;width:89px;height:22px;background:#f0f0f0;border-left:1px solid #fff;border-right:1px solid #000;border-bottom:1px solid #000;border-radius:0 0 3px 3px"></div>
<div class="a" style="left:370px;top:785px;width:92px;height:25px;background:#f0f0f0;border-left:1px solid #fff;border-right:1px solid #000;border-bottom:1px solid #000;border-radius:0 0 3px 3px"></div>
<svg class="a" style="left:372px;top:789px" width="16" height="16"><circle cx="8" cy="8" r="7.5" fill="#d04040"/><circle cx="6" cy="5" r="3" fill="#f09090" opacity=".6"/><path d="M5 13 L8 4 L12 3 M6 9 L10 8" stroke="#f0d040" stroke-width="1" fill="none"/></svg>
<div class="t" style="left:397px;top:789px;font-size:16px">Fixtures</div>
<svg class="a" style="left:464px;top:788px" width="16" height="16"><circle cx="8" cy="8" r="7.5" fill="#b040c0"/><circle cx="6" cy="5" r="3" fill="#e090f0" opacity=".6"/><text x="4" y="13" font-size="12" fill="#f0e040" font-style="italic" font-family="Liberation Serif">S</text></svg>
<div class="t" style="left:488px;top:788px;font-size:16px">Scenes</div>
<svg class="a" style="left:555px;top:788px" width="16" height="16"><circle cx="8" cy="8" r="7.5" fill="#3a8ec8"/><circle cx="6" cy="5" r="3" fill="#9cd0f0" opacity=".7"/><text x="3" y="13" font-size="12" fill="#e8e040" font-style="italic" font-family="Liberation Serif">Q</text></svg>
<div class="t" style="left:587px;top:788px;font-size:16px">Cues</div>


<!-- RIGHT PANEL -->
<div class="a" style="left:1322px;top:108px;width:1px;height:704px;background:#b8b8b8"></div>
<div class="a" style="left:1328px;top:108px;width:2px;height:704px;background:#8a8a8a"></div>
<div class="ptitle" style="left:1334px;top:108px;width:203px;font-size:18px">Navigator - Resources</div>
<div class="a" style="left:1539px;top:111px;width:97px;height:3px;border-top:1px solid #a0a0a0;border-bottom:1px solid #fff"></div>
<div class="a" style="left:1539px;top:116px;width:97px;height:3px;border-top:1px solid #a0a0a0;border-bottom:1px solid #fff"></div>
<div class="a" style="left:1638px;top:109px;width:12px;height:12px;background:#f0f0f0;border-top:1px solid #fff;border-left:1px solid #fff;border-right:1px solid #777;border-bottom:1px solid #777"><div class="a" style="left:2px;top:3px;border-left:3px solid transparent;border-right:3px solid transparent;border-top:4px solid #999"></div></div>
<div class="a" style="left:1652px;top:110px;width:11px;height:11px;background:#f0f0f0;border-right:1px solid #777;border-bottom:1px solid #777"><svg class="a" style="left:1px;top:1px" width="9" height="9"><path d="M1.5 1.5L7.5 7.5M7.5 1.5L1.5 7.5" stroke="#000" stroke-width="2"/></svg></div>
<div class="a" style="left:1668px;top:108px;width:2px;height:704px;background:#999"></div>
<div class="a" style="left:1334px;top:124px;width:329px;height:663px;border-top:2px solid #fff;border-left:2px solid #fff;border-right:1px solid #000;border-bottom:1px solid #000"></div>
<div class="a" style="left:1337px;top:126px;width:325px;height:660px;background:#fff;border-top:2px solid #000;border-left:2px solid #000"></div>
<div class="a" style="left:1339px;top:128px;width:319px;height:19px;background:#f0f0f0;border-top:1px solid #fff;border-left:1px solid #fff;border-right:2px solid #777;border-bottom:2px solid #777"></div>
<div class="t" style="left:1344px;top:130px;font-size:16px">Resources</div>
<div class="a" style="left:1342px;top:151px;width:9px;height:9px;border:1px solid #a0a0a0;background:#fff"></div><div class="a" style="left:1344px;top:155px;width:5px;height:1px;background:#000"></div><div class="a" style="left:1346px;top:153px;width:1px;height:5px;background:#000"></div><div class="a" style="left:1352px;top:155px;width:5px;height:1px;border-top:1px dotted #999"></div><svg class="a" style="left:1357px;top:148px" width="16" height="16"><rect x="1" y="2" width="13" height="9" fill="#008000" stroke="#000"/><path d="M3 4h4M3 6h4M3 8h4" stroke="#fff"/><rect x="9" y="4" width="3" height="3" fill="#fff" stroke="#000" stroke-width=".5"/><rect x="8" y="11" width="4" height="2" fill="#ff0" stroke="#000" stroke-width=".5"/><rect x="13" y="3" width="2" height="7" fill="#000"/></svg><div class="t" style="left:1380px;top:151px;font-size:16px">Interface Manager</div><div class="a" style="left:1342px;top:173px;width:9px;height:9px;border:1px solid #a0a0a0;background:#fff"></div><div class="a" style="left:1344px;top:177px;width:5px;height:1px;background:#000"></div><div class="a" style="left:1346px;top:175px;width:1px;height:5px;background:#000"></div><div class="a" style="left:1352px;top:177px;width:5px;height:1px;border-top:1px dotted #999"></div><svg class="a" style="left:1357px;top:170px" width="16" height="16"><rect x="1" y="2" width="13" height="9" fill="#008000" stroke="#000"/><path d="M3 4h4M3 6h4M3 8h4" stroke="#fff"/><rect x="9" y="4" width="3" height="3" fill="#fff" stroke="#000" stroke-width=".5"/><rect x="8" y="11" width="4" height="2" fill="#ff0" stroke="#000" stroke-width=".5"/><rect x="13" y="3" width="2" height="7" fill="#000"/></svg><div class="t" style="left:1380px;top:173px;font-size:16px">Input Output Patch</div><div class="a" style="left:1342px;top:195px;width:9px;height:9px;border:1px solid #a0a0a0;background:#fff"></div><div class="a" style="left:1344px;top:199px;width:5px;height:1px;background:#000"></div><div class="a" style="left:1346px;top:197px;width:1px;height:5px;background:#000"></div><div class="a" style="left:1352px;top:199px;width:5px;height:1px;border-top:1px dotted #999"></div><svg class="a" style="left:1357px;top:192px" width="16" height="16"><circle cx="8" cy="8" r="7.5" fill="#001a80"/><path d="M8 8 L4 1.5 A7 7 0 0 1 12 1.5z M8 8 L14.5 12 A7 7 0 0 1 10 14.5z M8 8 L6 14.5 A7 7 0 0 1 1.5 11z M8 8 L1.5 5 A7 7 0 0 1 3 2.5z" fill="#ffff00"/><path d="M8 8L3 3M8 8L13 3M8 8L3 13M8 8L13 13" stroke="#ff0" stroke-width="4"/><circle cx="8" cy="8" r="1.5" fill="#001a80"/></svg><div class="t" style="left:1380px;top:195px;font-size:16px">DirectX 3D</div><div class="a" style="left:1342px;top:217px;width:9px;height:9px;border:1px solid #a0a0a0;background:#fff"></div><div class="a" style="left:1344px;top:221px;width:5px;height:1px;background:#000"></div><div class="a" style="left:1346px;top:219px;width:1px;height:5px;background:#000"></div><div class="a" style="left:1352px;top:221px;width:5px;height:1px;border-top:1px dotted #999"></div><svg class="a" style="left:1367px;top:214px" width="16" height="16"><rect x="3" y="4" width="10" height="7" rx="1" fill="#ccc" stroke="#222"/><path d="M13 6l3-2v7l-3-2" fill="#fff" stroke="#222"/><rect x="2" y="9" width="2" height="2" fill="#e00"/></svg><div class="t" style="left:1390px;top:217px;font-size:16px">Video Manager</div><div class="a" style="left:1342px;top:239px;width:9px;height:9px;border:1px solid #a0a0a0;background:#fff"></div><div class="a" style="left:1344px;top:243px;width:5px;height:1px;background:#000"></div><div class="a" style="left:1346px;top:241px;width:1px;height:5px;background:#000"></div><div class="a" style="left:1352px;top:243px;width:5px;height:1px;border-top:1px dotted #999"></div><svg class="a" style="left:1357px;top:236px" width="16" height="16"><rect x="1" y="9" width="12" height="5" fill="#ffff80" stroke="#222"/><circle cx="10" cy="6" r="5" fill="#e0f0ff" stroke="#222"/><path d="M7 3l6 6M6 7l8-3" stroke="#00c" stroke-width="1"/><path d="M8 2l4 8" stroke="#f00"/></svg><div class="t" style="left:1380px;top:239px;font-size:16px">CD/DVD Media Manager</div><div class="a" style="left:1342px;top:261px;width:9px;height:9px;border:1px solid #a0a0a0;background:#fff"></div><div class="a" style="left:1344px;top:265px;width:5px;height:1px;background:#000"></div><div class="a" style="left:1346px;top:263px;width:1px;height:5px;background:#000"></div><div class="a" style="left:1352px;top:265px;width:5px;height:1px;border-top:1px dotted #999"></div><svg class="a" style="left:1357px;top:258px" width="16" height="16"><path d="M1 6h3l4-4v12l-4-4H1z" fill="#ffff90" stroke="#222"/><path d="M10 4q3 4 0 8M13 3q2 5 0 10" stroke="#777" fill="none"/></svg><div class="t" style="left:1380px;top:261px;font-size:16px">Audio Manager</div><div class="a" style="left:1342px;top:283px;width:9px;height:9px;border:1px solid #a0a0a0;background:#fff"></div><div class="a" style="left:1344px;top:287px;width:5px;height:1px;background:#000"></div><div class="a" style="left:1346px;top:285px;width:1px;height:5px;background:#000"></div><div class="a" style="left:1352px;top:287px;width:5px;height:1px;border-top:1px dotted #999"></div><svg class="a" style="left:1357px;top:280px" width="16" height="16"><rect x="2" y="1" width="12" height="14" fill="#e8f0ff" stroke="#444"/><circle cx="8" cy="9" r="4.5" fill="#fff" stroke="#0040ff" stroke-width="1.3"/><path d="M8 6v3l2 1" stroke="#0040ff" fill="none"/></svg><div class="t" style="left:1380px;top:283px;font-size:16px">Time Code Files</div><div class="a" style="left:1347px;top:309px;width:10px;height:1px;border-top:1px dotted #999"></div><svg class="a" style="left:1357px;top:302px" width="16" height="16"><text x="0" y="14" font-size="17" font-weight="bold" fill="#0010d0" font-family="Liberation Serif">A</text></svg><div class="t" style="left:1380px;top:305px;font-size:16px">Text Manager</div><div class="a" style="left:1342px;top:327px;width:9px;height:9px;border:1px solid #a0a0a0;background:#fff"></div><div class="a" style="left:1344px;top:331px;width:5px;height:1px;background:#000"></div><div class="a" style="left:1346px;top:329px;width:1px;height:5px;background:#000"></div><div class="a" style="left:1352px;top:331px;width:5px;height:1px;border-top:1px dotted #999"></div><svg class="a" style="left:1357px;top:324px" width="16" height="16"><rect x="1" y="3" width="13" height="12" fill="#eee" stroke="#444"/><path d="M4 1l4 8M9 2L6 9" stroke="#f00" stroke-width="1.5"/><path d="M8 3v12" stroke="#444"/></svg><div class="t" style="left:1380px;top:327px;font-size:16px">Bitmap Manager</div><div class="a" style="left:1342px;top:349px;width:9px;height:9px;border:1px solid #a0a0a0;background:#fff"></div><div class="a" style="left:1344px;top:353px;width:5px;height:1px;background:#000"></div><div class="a" style="left:1346px;top:351px;width:1px;height:5px;background:#000"></div><div class="a" style="left:1352px;top:353px;width:5px;height:1px;border-top:1px dotted #999"></div><svg class="a" style="left:1357px;top:346px" width="16" height="16"><rect x="3" y="1" width="11" height="9" fill="#ffff80" stroke="#444"/><rect x="5" y="3" width="7" height="5" fill="#0080ff"/><rect x="1" y="12" width="13" height="3" fill="#ffff80" stroke="#444"/></svg><div class="t" style="left:1380px;top:349px;font-size:16px">System Control</div><div class="a" style="left:1346px;top:161px;width:1px;height:190px;border-left:1px dotted #999"></div>
<!-- right tabs -->
<div class="a" style="left:1433px;top:786px;width:70px;height:22px;background:#f0f0f0;border-left:1px solid #fff;border-right:1px solid #000;border-bottom:1px solid #000;border-radius:0 0 3px 3px"></div>
<div class="a" style="left:1503px;top:786px;width:68px;height:22px;background:#f0f0f0;border-left:1px solid #fff;border-right:1px solid #000;border-bottom:1px solid #000;border-radius:0 0 3px 3px"></div>
<div class="a" style="left:1571px;top:786px;width:58px;height:22px;background:#f0f0f0;border-left:1px solid #fff;border-right:1px solid #000;border-bottom:1px solid #000;border-radius:0 0 3px 3px"></div>
<div class="a" style="left:1343px;top:785px;width:90px;height:25px;background:#f0f0f0;border-left:1px solid #fff;border-right:1px solid #000;border-bottom:1px solid #000;border-radius:0 0 3px 3px"></div>
<svg class="a" style="left:1348px;top:789px" width="16" height="14"><ellipse cx="8" cy="7" rx="7" ry="3" fill="#e00"/><path d="M8 1v12M5 7h6" stroke="#ff0"/></svg>
<div class="t" style="left:1367px;top:792px;font-size:11.5px;letter-spacing:-0.3px;font-weight:bold;color:#111">Resources</div>
<svg class="a" style="left:1437px;top:789px" width="15" height="15"><circle cx="7.5" cy="7.5" r="7" fill="#d04040"/><circle cx="6" cy="5" r="3" fill="#f09090" opacity=".6"/><path d="M4 12 L7 4 L11 3 M5 8 L9 7" stroke="#f0d040" stroke-width="1" fill="none"/></svg>
<div class="t" style="left:1455px;top:792px;font-size:10.5px;letter-spacing:-0.3px;color:#333">Fixtures</div>
<svg class="a" style="left:1510px;top:789px" width="15" height="15"><circle cx="7.5" cy="7.5" r="7" fill="#b040c0"/><circle cx="6" cy="5" r="3" fill="#e090f0" opacity=".6"/><text x="4" y="12" font-size="11" fill="#f0e040" font-style="italic" font-family="Liberation Serif">S</text></svg>
<div class="t" style="left:1528px;top:792px;font-size:10.5px;letter-spacing:-0.3px;color:#333">Scenes</div>
<svg class="a" style="left:1577px;top:789px" width="15" height="15"><circle cx="7.5" cy="7.5" r="7" fill="#3a8ec8"/><circle cx="6" cy="5" r="3" fill="#9cd0f0" opacity=".7"/><text x="3" y="12" font-size="11" fill="#e8e040" font-style="italic" font-family="Liberation Serif">Q</text></svg>
<div class="t" style="left:1596px;top:792px;font-size:10.5px;letter-spacing:-0.3px;color:#333">Cues</div>


<!-- STATUS PANEL -->
<div class="a" style="left:2px;top:812px;width:1668px;height:8px;border-top:1px solid #a0a0a0;border-bottom:1px solid #fff;background:#f0f0f0;box-shadow:inset 0 1px 0 #fff, inset 0 -2px 0 #6a6a6a"></div>
<div class="a" style="left:7px;top:824px;width:12px;height:11px;background:#f0f0f0;border-right:1px solid #777;border-bottom:1px solid #777"><svg class="a" style="left:1px;top:1px" width="9" height="9"><path d="M1.5 1.5L7.5 7.5M7.5 1.5L1.5 7.5" stroke="#000" stroke-width="2"/></svg></div>
<div class="a" style="left:6px;top:837px;width:13px;height:12px;background:#f0f0f0;border-right:1px solid #777;border-bottom:1px solid #777"><div class="a" style="left:3px;top:2px;border-top:3.5px solid transparent;border-bottom:3.5px solid transparent;border-right:4px solid #000"></div></div>
<div class="a" style="left:5px;top:850px;width:15px;height:63px;background:#3c3c3c;overflow:hidden"><div class="t" style="left:-18px;top:21px;width:60px;height:17px;text-align:center;transform:rotate(90deg);font-size:17.5px;font-weight:bold;color:#fff;line-height:17px">Status</div></div>
<div class="a" style="left:12px;top:913px;width:8px;height:290px;border-left:1px solid #b0b0b0;border-right:1px solid #b0b0b0"></div>
<div class="a" style="left:20px;top:823px;width:713px;height:397px;border-top:2px solid #9a9a9a;border-left:2px solid #9a9a9a;border-right:1px solid #a0a0a0;border-bottom:1px solid #a0a0a0"></div>
<div class="a" style="left:22px;top:825px;width:706px;height:371px;border-top:2px solid #fff;border-left:2px solid #9a9a9a;border-right:1px solid #fff;border-bottom:2px solid #000;background:#202020"></div>
<div class="btn" style="left:40px;top:833px;width:65px;height:33px"><div class="t" style="left:0;width:63px;text-align:center;top:7px;font-size:16px">Input</div></div>
<div class="combo" style="left:134px;top:833px;width:198px;height:29px"><svg class="a" style="left:3px;top:5px" width="16" height="17"><path d="M7 2h5M12 2v5L4 13H1" stroke="#000" stroke-width="1.3" fill="none"/><path d="M8 1h4" stroke="#cc0" stroke-dasharray="1 1"/></svg><div class="t" style="left:22px;top:6px;font-size:16px">Universe 1</div><div class="cbtn" style="width:25px"></div></div>
<div class="t" style="left:384px;top:840px;font-size:16px;color:#c8c8c8">Display</div>
<div class="combo" style="left:449px;top:833px;width:135px;height:28px"><div class="t" style="left:2px;top:5px;font-size:16px">Decimal</div><div class="cbtn" style="width:25px"></div></div>
<div class="a" style="left:40px;top:871px;width:542px;height:29px;border-top:2px solid #808080;border-left:2px solid #808080;border-right:2px solid #fff;border-bottom:2px solid #fff"><div class="t" style="left:5px;top:5px;font-size:16px;color:#d0d0d0">LED lamps\Color mix dimmer 4-Color Mix Dimmer</div></div>
<div class="a" style="left:24px;top:907px;width:495px;height:285px;background:#000;border-top:1px solid #808080"></div><div class="a" style="left:69px;top:908px;width:1px;height:284px;background:#808080"></div><div class="a" style="left:114px;top:908px;width:1px;height:284px;background:#808080"></div><div class="a" style="left:159px;top:908px;width:1px;height:284px;background:#808080"></div><div class="a" style="left:204px;top:908px;width:1px;height:284px;background:#808080"></div><div class="a" style="left:249px;top:908px;width:1px;height:284px;background:#808080"></div><div class="a" style="left:294px;top:908px;width:1px;height:284px;background:#808080"></div><div class="a" style="left:339px;top:908px;width:1px;height:284px;background:#808080"></div><div class="a" style="left:384px;top:908px;width:1px;height:284px;background:#808080"></div><div class="a" style="left:429px;top:908px;width:1px;height:284px;background:#808080"></div><div class="a" style="left:474px;top:908px;width:1px;height:284px;background:#808080"></div><div class="a" style="left:519px;top:908px;width:1px;height:284px;background:#808080"></div><div class="a" style="left:24px;top:927px;width:495px;height:1px;background:#808080"></div><div class="a" style="left:24px;top:947px;width:495px;height:1px;background:#808080"></div><div class="a" style="left:24px;top:967px;width:495px;height:1px;background:#808080"></div><div class="a" style="left:24px;top:987px;width:495px;height:1px;background:#808080"></div><div class="a" style="left:24px;top:1007px;width:495px;height:1px;background:#808080"></div><div class="a" style="left:24px;top:1027px;width:495px;height:1px;background:#808080"></div><div class="a" style="left:24px;top:1047px;width:495px;height:1px;background:#808080"></div><div class="a" style="left:24px;top:1067px;width:495px;height:1px;background:#808080"></div><div class="a" style="left:24px;top:1087px;width:495px;height:1px;background:#808080"></div><div class="a" style="left:24px;top:1107px;width:495px;height:1px;background:#808080"></div><div class="a" style="left:24px;top:1127px;width:495px;height:1px;background:#808080"></div><div class="a" style="left:24px;top:1147px;width:495px;height:1px;background:#808080"></div><div class="a" style="left:24px;top:1167px;width:495px;height:1px;background:#808080"></div><div class="a" style="left:24px;top:1187px;width:495px;height:1px;background:#808080"></div><div class="t" style="left:27px;top:911px;font-size:15.5px;font-style:italic;color:#00e0e0">1</div><div class="t" style="left:27px;top:931px;font-size:15.5px;font-style:italic;color:#00e0e0">11</div><div class="t" style="left:27px;top:951px;font-size:15.5px;font-style:italic;color:#00e0e0">21</div><div class="t" style="left:27px;top:971px;font-size:15.5px;font-style:italic;color:#00e0e0">31</div><div class="t" style="left:27px;top:991px;font-size:15.5px;font-style:italic;color:#00e0e0">41</div><div class="t" style="left:27px;top:1011px;font-size:15.5px;font-style:italic;color:#00e0e0">51</div><div class="t" style="left:27px;top:1031px;font-size:15.5px;font-style:italic;color:#00e0e0">61</div><div class="t" style="left:27px;top:1051px;font-size:15.5px;font-style:italic;color:#00e0e0">71</div><div class="t" style="left:27px;top:1071px;font-size:15.5px;font-style:italic;color:#00e0e0">81</div><div class="t" style="left:27px;top:1091px;font-size:15.5px;font-style:italic;color:#00e0e0">91</div><div class="t" style="left:27px;top:1111px;font-size:15.5px;font-style:italic;color:#00e0e0">101</div><div class="t" style="left:27px;top:1131px;font-size:15.5px;font-style:italic;color:#00e0e0">111</div><div class="t" style="left:27px;top:1151px;font-size:15.5px;font-style:italic;color:#00e0e0">121</div><div class="t" style="left:27px;top:1171px;font-size:15.5px;font-style:italic;color:#00e0e0">131</div><div class="t" style="left:69px;width:45px;text-align:center;top:911px;font-size:15.5px;font-style:italic;color:#00e000">61</div><div class="t" style="left:114px;width:45px;text-align:center;top:911px;font-size:15.5px;font-style:italic;color:#00e000">255</div><div class="t" style="left:159px;width:45px;text-align:center;top:911px;font-size:15.5px;font-style:italic;color:#00e000">255</div><div class="t" style="left:204px;width:45px;text-align:center;top:911px;font-size:15.5px;font-style:italic;color:#00e000">255</div><div class="t" style="left:249px;width:45px;text-align:center;top:911px;font-size:15.5px;font-style:italic;color:#00e000">61</div><div class="t" style="left:294px;width:45px;text-align:center;top:911px;font-size:15.5px;font-style:italic;color:#00e000">203</div><div class="t" style="left:339px;width:45px;text-align:center;top:911px;font-size:15.5px;font-style:italic;color:#00e000">255</div><div class="t" style="left:384px;width:45px;text-align:center;top:911px;font-size:15.5px;font-style:italic;color:#00e000">255</div><div class="t" style="left:429px;width:45px;text-align:center;top:1151px;font-size:15.5px;font-style:italic;color:#f00000">152</div><div class="t" style="left:474px;width:45px;text-align:center;top:1151px;font-size:15.5px;font-style:italic;color:#f00000">181</div><div class="t" style="left:69px;width:45px;text-align:center;top:1171px;font-size:15.5px;font-style:italic;color:#f00000">65</div><div class="t" style="left:114px;width:45px;text-align:center;top:1171px;font-size:15.5px;font-style:italic;color:#f00000">77</div><div class="t" style="left:204px;width:45px;text-align:center;top:1171px;font-size:15.5px;font-style:italic;color:#f00000">197</div><div class="t" style="left:294px;width:45px;text-align:center;top:1171px;font-size:15.5px;font-style:italic;color:#f00000">68</div>
<div class="a" style="left:700px;top:907px;width:27px;height:285px;background:#f0f0f0"></div>
<div class="a" style="left:707px;top:933px;width:12px;height:64px;background:#888"></div>
<div class="a" style="left:22px;top:1196px;width:707px;height:24px;background:#f0f0f0;border-bottom:1px solid #a0a0a0"></div>
<div class="btn" style="left:22px;top:1195px;width:27px;height:24px"><svg class="a" style="left:5px;top:3px" width="16" height="16"><path d="M3 2v12M13 2L5 8l8 6z" stroke="#a0a0a0" fill="#a0a0a0"/></svg></div><div class="btn" style="left:49px;top:1195px;width:27px;height:24px"><svg class="a" style="left:5px;top:3px" width="16" height="16"><path d="M12 2L4 8l8 6z" fill="#a0a0a0"/></svg></div><div class="btn" style="left:76px;top:1195px;width:27px;height:24px"><svg class="a" style="left:5px;top:3px" width="16" height="16"><path d="M4 2l8 6-8 6z" fill="#a0a0a0"/></svg></div><div class="btn" style="left:103px;top:1195px;width:27px;height:24px"><svg class="a" style="left:5px;top:3px" width="16" height="16"><path d="M13 2v12M3 2l8 6-8 6z" stroke="#a0a0a0" fill="#a0a0a0"/></svg></div>
<svg class="a" style="left:128px;top:1195px" width="220" height="26">
 <path d="M3 0 L10 24 L62 24 L68 0" fill="#f0f0f0" stroke="#000" stroke-width="1"/>
 <path d="M68 0 L74 24 L126 24 L133 0" fill="#f0f0f0" stroke="#000" stroke-width="1"/>
 <path d="M133 0 L139 24 L200 24 L207 0" fill="#fff" stroke="#000" stroke-width="1"/>
</svg>
<div class="t" style="left:142px;top:1199px;font-size:17.5px">Audio</div>
<div class="t" style="left:206px;top:1199px;font-size:17.5px">Notes</div>
<div class="t" style="left:270px;top:1199px;font-size:17.5px;font-weight:bold">Output</div>


<!-- FIXTURE CONTROL PANEL -->
<div class="a" style="left:737px;top:819px;width:2px;height:405px;background:#8a8a8a"></div>
<div class="a" style="left:742px;top:825px;width:13px;height:11px;background:#f0f0f0;border-right:1px solid #777;border-bottom:1px solid #777"><svg class="a" style="left:1px;top:1px" width="9" height="9"><path d="M1.5 1.5L7.5 7.5M7.5 1.5L1.5 7.5" stroke="#000" stroke-width="2"/></svg></div>
<div class="a" style="left:742px;top:838px;width:13px;height:11px;background:#f0f0f0;border-right:1px solid #777;border-bottom:1px solid #777"><div class="a" style="left:3px;top:2px;border-top:3.5px solid transparent;border-bottom:3.5px solid transparent;border-right:4px solid #000"></div></div>
<div class="a" style="left:741px;top:851px;width:16px;height:139px;background:#3c3c3c;overflow:hidden"><div class="t" style="left:-58px;top:57px;width:140px;height:18px;text-align:center;transform:rotate(90deg);font-size:18px;font-weight:bold;color:#fff;line-height:18px">Fixture Control</div></div>
<div class="a" style="left:744px;top:990px;width:9px;height:230px;border-left:1px solid #b0b0b0;border-right:1px solid #b0b0b0"></div>
<div class="a dk" style="left:757px;top:823px;width:908px;height:371px"></div>
<div class="a" style="left:768px;top:834px;width:69px;height:14px;background:linear-gradient(#ff4444,#e81c1c 50%,#b80000);box-shadow:inset 0 1px 0 rgba(255,255,255,.9);clip-path:polygon(4px 0,calc(100% - 4px) 0,100% 4px,100% calc(100% - 3px),calc(100% - 3px) 100%,3px 100%,0 calc(100% - 3px),0 4px)"><div class="t" style="left:0;width:69px;text-align:center;top:3px;font-size:10px;color:#ffe8e8;letter-spacing:0.2px">Dimmer</div></div><div class="a" style="left:768px;top:848px;width:69px;height:150px;background:linear-gradient(170deg,#9a9a9a,#7c7c7c 60%,#666);border-left:1px solid #f0f0f0;border-radius:0 0 6px 6px;box-shadow:inset -1px -1px 0 #505050"></div><div class="a" style="left:773px;top:854px;width:30px;height:110px;background:#5d5d5d"></div><div class="a" style="left:786px;top:865px;width:4px;height:82px;background:#000;border-right:1px solid #fff;border-bottom:1px solid #fff"></div><div class="a" style="left:775px;top:863px;width:24px;height:13px;background:#6880c8;border-top:1px solid #fff;border-left:1px solid #fff;border-right:1px solid #444;border-bottom:1px solid #444"></div><div class="a" style="left:773px;top:965px;width:60px;height:29px;background:#7a7a7a;border:1px solid #d8d8d8;border-right-color:#9a9a9a;border-bottom-color:#9a9a9a"></div><div class="a" style="left:777px;top:968px;width:41px;height:23px;background:#000;border:1px solid #000;overflow:hidden"><div class="a" style="left:1px;top:1px;width:38px;height:20px;border-top:1px solid #808080;border-left:1px solid #808080"></div><svg class="a" style="left:9px;top:0px" width="22" height="22"><circle cx="11" cy="11" r="10" fill="#fafafa"/><path d="M8 4v14M11 3v15M14 4v14M5 5h12M5 16h12" stroke="#000" stroke-width=".9" stroke-dasharray="2 1.2"/><path d="M7 7v8M13 6v9" stroke="#999" stroke-width=".7"/></svg></div><div class="a" style="left:821px;top:968px;width:2px;height:23px;background:#000"></div><div class="a" style="left:825px;top:979px;border-left:3px solid transparent;border-right:3px solid transparent;border-top:3px solid #000"></div><div class="a" style="left:848px;top:834px;width:164px;height:14px;background:linear-gradient(#ff4444,#e81c1c 50%,#b80000);box-shadow:inset 0 1px 0 rgba(255,255,255,.9);clip-path:polygon(4px 0,calc(100% - 4px) 0,100% 4px,100% calc(100% - 3px),calc(100% - 3px) 100%,3px 100%,0 calc(100% - 3px),0 4px)"><div class="t" style="left:0;width:164px;text-align:center;top:3px;font-size:10px;color:#ffe8e8;letter-spacing:0.2px">Yoke</div></div><div class="a" style="left:848px;top:848px;width:164px;height:150px;background:linear-gradient(170deg,#9a9a9a,#7a7a7a 60%,#666);border-left:1px solid #f0f0f0;border-radius:0 0 6px 6px;box-shadow:inset -1px -1px 0 #505050"></div><svg class="a" style="left:848px;top:848px" width="164" height="150">
 <defs><radialGradient id="ig" cx="30%" cy="25%" r="85%"><stop offset="0" stop-color="#ffffff"/><stop offset=".45" stop-color="#f0f0f0"/><stop offset="1" stop-color="#a8a8a8"/></radialGradient>
 <radialGradient id="og" cx="60%" cy="65%" r="70%"><stop offset="0" stop-color="#fbf8cc"/><stop offset="1" stop-color="#e8e4b8"/></radialGradient></defs>
 <circle cx="83" cy="76" r="69.5" fill="url(#og)"/>
 <path d="M83 6.5 A69.5 69.5 0 0 0 14 68" stroke="#fff" stroke-width="1.5" fill="none" opacity=".7"/>
 <g stroke="#000" stroke-width="2">
  <path d="M84.5 35v-28M84.5 123v21M40.5 79h-27M128.5 79h24"/>
  <path d="M53.4 47.9L34.5 29M115.6 47.9L133 30.5M53.4 110.1L35 126.5M115.6 110.1L131 124.5" stroke-width="1.6"/>
 </g>
 <circle cx="84.5" cy="79" r="44" fill="url(#ig)"/>
 <g font-family="Liberation Sans" font-size="8.5" fill="#505050"><text x="92" y="27">0°</text><text x="20" y="77">90°</text><text x="135" y="91">270°</text><text x="67" y="144">180°</text></g>
 <path d="M82 74 L100 96" stroke="#0000e0" stroke-width="1"/>
 <path d="M104 91 L104 114" stroke="#ff9a00" stroke-width="2.4"/>
 <path d="M104 97 L97 104 L98 106 L104 102 L110 106 L111 104z" fill="#ffc000" stroke="#ff8000" stroke-width="1"/>
 <path d="M104 108 L99 114 L109 114z" fill="#ffc000" stroke="#ff8000" stroke-width="1"/>
 <circle cx="104" cy="105" r="1.8" fill="#000"/>
 <path d="M78 6 L84 1 L90 6 M84 0v6" stroke="#ffb000" stroke-width="2" fill="none"/>
</svg><div class="a" style="left:860px;top:854px;width:17px;height:17px;background:#f0f0f0;border:1px solid #fff;border-right-color:#555;border-bottom-color:#555"><div class="t" style="left:0;width:15px;text-align:center;top:2px;font-size:13px">F</div></div><div class="a" style="left:984px;top:854px;width:17px;height:17px;background:#f0f0f0;border:1px solid #fff;border-right-color:#555;border-bottom-color:#555"><div class="t" style="left:0;width:15px;text-align:center;top:2px;font-size:13px">M</div></div><div class="a" style="left:860px;top:977px;width:17px;height:17px;background:#f0f0f0;border:1px solid #fff;border-right-color:#555;border-bottom-color:#555"><div class="t" style="left:0;width:15px;text-align:center;top:2px;font-size:13px">R</div></div><div class="a" style="left:984px;top:977px;width:17px;height:17px;background:#f0f0f0;border:1px solid #fff;border-right-color:#555;border-bottom-color:#555"><div class="t" style="left:0;width:15px;text-align:center;top:2px;font-size:13px">C</div></div><div class="a" style="left:1023px;top:834px;width:69px;height:14px;background:linear-gradient(#ff4444,#e81c1c 50%,#b80000);box-shadow:inset 0 1px 0 rgba(255,255,255,.9);clip-path:polygon(4px 0,calc(100% - 4px) 0,100% 4px,100% calc(100% - 3px),calc(100% - 3px) 100%,3px 100%,0 calc(100% - 3px),0 4px)"><div class="t" style="left:0;width:69px;text-align:center;top:3px;font-size:10px;color:#ffe8e8;letter-spacing:0.2px">Color1</div></div><div class="a" style="left:1023px;top:848px;width:69px;height:150px;background:linear-gradient(170deg,#9a9a9a,#7c7c7c 60%,#666);border-left:1px solid #f0f0f0;border-radius:0 0 6px 6px;box-shadow:inset -1px -1px 0 #505050"></div><div class="a" style="left:1028px;top:854px;width:30px;height:110px;background:#5d5d5d"></div><div class="a" style="left:1041px;top:865px;width:4px;height:82px;background:#000;border-right:1px solid #fff;border-bottom:1px solid #fff"></div><div class="a" style="left:1030px;top:881px;width:24px;height:13px;background:#6880c8;border-top:1px solid #fff;border-left:1px solid #fff;border-right:1px solid #444;border-bottom:1px solid #444"></div><div class="a" style="left:1028px;top:965px;width:60px;height:29px;background:#7a7a7a;border:1px solid #d8d8d8;border-right-color:#9a9a9a;border-bottom-color:#9a9a9a"></div><div class="a" style="left:1032px;top:968px;width:41px;height:23px;background:#ff00ff;border:2px solid #000;box-shadow:inset 0 -3px 0 #ff80c0"></div><div class="a" style="left:1076px;top:968px;width:2px;height:23px;background:#000"></div><div class="a" style="left:1080px;top:979px;border-left:3px solid transparent;border-right:3px solid transparent;border-top:3px solid #000"></div><div class="a" style="left:1103px;top:834px;width:69px;height:14px;background:linear-gradient(#ff4444,#e81c1c 50%,#b80000);box-shadow:inset 0 1px 0 rgba(255,255,255,.9);clip-path:polygon(4px 0,calc(100% - 4px) 0,100% 4px,100% calc(100% - 3px),calc(100% - 3px) 100%,3px 100%,0 calc(100% - 3px),0 4px)"><div class="t" style="left:0;width:69px;text-align:center;top:3px;font-size:10px;color:#ffe8e8;letter-spacing:0.2px">Color2</div></div><div class="a" style="left:1103px;top:848px;width:69px;height:150px;background:linear-gradient(170deg,#9a9a9a,#7c7c7c 60%,#666);border-left:1px solid #f0f0f0;border-radius:0 0 6px 6px;box-shadow:inset -1px -1px 0 #505050"></div><div class="a" style="left:1108px;top:854px;width:30px;height:110px;background:#5d5d5d"></div><div class="a" style="left:1121px;top:865px;width:4px;height:82px;background:#000;border-right:1px solid #fff;border-bottom:1px solid #fff"></div><div class="a" style="left:1110px;top:921px;width:24px;height:13px;background:#6880c8;border-top:1px solid #fff;border-left:1px solid #fff;border-right:1px solid #444;border-bottom:1px solid #444"></div><div class="a" style="left:1108px;top:965px;width:60px;height:29px;background:#7a7a7a;border:1px solid #d8d8d8;border-right-color:#9a9a9a;border-bottom-color:#9a9a9a"></div><div class="a" style="left:1112px;top:968px;width:41px;height:23px;background:linear-gradient(#80ffff 60%,#00ffff 60%);border:2px solid #000"></div><div class="a" style="left:1156px;top:968px;width:2px;height:23px;background:#000"></div><div class="a" style="left:1160px;top:979px;border-left:3px solid transparent;border-right:3px solid transparent;border-top:3px solid #000"></div><div class="a" style="left:1183px;top:834px;width:69px;height:14px;background:linear-gradient(#ffffff,#f4f4f4 50%,#c8c8c8);box-shadow:inset 0 1px 0 rgba(255,255,255,.9);clip-path:polygon(4px 0,calc(100% - 4px) 0,100% 4px,100% calc(100% - 3px),calc(100% - 3px) 100%,3px 100%,0 calc(100% - 3px),0 4px)"><div class="t" style="left:0;width:69px;text-align:center;top:3px;font-size:10px;color:#101040;letter-spacing:0.2px">Frost</div></div><div class="a" style="left:1183px;top:848px;width:69px;height:150px;background:linear-gradient(170deg,#9a9a9a,#7c7c7c 60%,#666);border-left:1px solid #f0f0f0;border-radius:0 0 6px 6px;box-shadow:inset -1px -1px 0 #505050"></div><div class="a" style="left:1188px;top:854px;width:30px;height:110px;background:#5d5d5d"></div><div class="a" style="left:1201px;top:865px;width:4px;height:82px;background:#000;border-right:1px solid #fff;border-bottom:1px solid #fff"></div><div class="a" style="left:1190px;top:942px;width:24px;height:13px;background:#6880c8;border-top:1px solid #fff;border-left:1px solid #fff;border-right:1px solid #444;border-bottom:1px solid #444"></div><div class="a" style="left:1226px;top:854px;width:22px;height:20px;border-radius:5px;background:linear-gradient(#b8b8b8,#7a7a7a);border:1px solid #e8e8e8;border-right-color:#333;border-bottom-color:#333"><div class="t" style="left:0;width:20px;text-align:center;top:4px;font-size:10.5px;color:#101030">F</div></div><div class="a" style="left:1226px;top:874px;width:22px;height:20px;border-radius:5px;background:linear-gradient(#b8b8b8,#7a7a7a);border:1px solid #e8e8e8;border-right-color:#333;border-bottom-color:#333"><div class="t" style="left:0;width:20px;text-align:center;top:4px;font-size:10.5px;color:#101030">P</div></div><div class="a" style="left:1226px;top:894px;width:22px;height:20px;border-radius:5px;background:linear-gradient(#b8b8b8,#7a7a7a);border:1px solid #e8e8e8;border-right-color:#333;border-bottom-color:#333"><div class="t" style="left:0;width:20px;text-align:center;top:4px;font-size:10.5px;color:#101030">R</div></div><div class="a" style="left:1226px;top:914px;width:22px;height:20px;border-radius:5px;background:linear-gradient(#b8b8b8,#7a7a7a);border:1px solid #e8e8e8;border-right-color:#333;border-bottom-color:#333"><div class="t" style="left:0;width:20px;text-align:center;top:4px;font-size:10.5px;color:#101030">R</div></div><div class="a" style="left:1188px;top:965px;width:60px;height:29px;background:#7a7a7a;border:1px solid #d8d8d8;border-right-color:#9a9a9a;border-bottom-color:#9a9a9a"></div><div class="a" style="left:1192px;top:968px;width:41px;height:23px;background:#000;border:1px solid #000;overflow:hidden"><div class="a" style="left:1px;top:1px;width:38px;height:20px;border-top:1px solid #808080;border-left:1px solid #808080"></div><svg class="a" style="left:9px;top:0px" width="22" height="22"><circle cx="11" cy="11" r="10" fill="#fafafa"/><path d="M8 4v14M11 3v15M14 4v14M5 5h12M5 16h12" stroke="#000" stroke-width=".9" stroke-dasharray="2 1.2"/><path d="M7 7v8M13 6v9" stroke="#999" stroke-width=".7"/></svg></div><div class="a" style="left:1236px;top:968px;width:2px;height:23px;background:#000"></div><div class="a" style="left:1240px;top:979px;border-left:3px solid transparent;border-right:3px solid transparent;border-top:3px solid #000"></div><div class="a" style="left:1263px;top:834px;width:69px;height:14px;background:linear-gradient(#ffffff,#f4f4f4 50%,#c8c8c8);box-shadow:inset 0 1px 0 rgba(255,255,255,.9);clip-path:polygon(4px 0,calc(100% - 4px) 0,100% 4px,100% calc(100% - 3px),calc(100% - 3px) 100%,3px 100%,0 calc(100% - 3px),0 4px)"><div class="t" style="left:0;width:69px;text-align:center;top:3px;font-size:10px;color:#101040;letter-spacing:0.2px">Rotate1</div></div><div class="a" style="left:1263px;top:848px;width:69px;height:150px;background:linear-gradient(170deg,#9a9a9a,#7c7c7c 60%,#666);border-left:1px solid #f0f0f0;border-radius:0 0 6px 6px;box-shadow:inset -1px -1px 0 #505050"></div><div class="a" style="left:1268px;top:854px;width:30px;height:110px;background:#5d5d5d"></div><div class="a" style="left:1281px;top:865px;width:4px;height:82px;background:#000;border-right:1px solid #fff;border-bottom:1px solid #fff"></div><div class="a" style="left:1270px;top:942px;width:24px;height:13px;background:#6880c8;border-top:1px solid #fff;border-left:1px solid #fff;border-right:1px solid #444;border-bottom:1px solid #444"></div><div class="a" style="left:1268px;top:965px;width:60px;height:29px;background:#7a7a7a;border:1px solid #d8d8d8;border-right-color:#9a9a9a;border-bottom-color:#9a9a9a"></div><div class="a" style="left:1272px;top:968px;width:41px;height:23px;background:#fff;border:2px solid #000;overflow:hidden"><div class="t" style="left:1px;top:2px;font-size:17.5px;letter-spacing:-0.7px;color:#000820">Stop</div></div><div class="a" style="left:1316px;top:968px;width:2px;height:23px;background:#000"></div><div class="a" style="left:1320px;top:979px;border-left:3px solid transparent;border-right:3px solid transparent;border-top:3px solid #000"></div><div class="a" style="left:1343px;top:834px;width:69px;height:14px;background:linear-gradient(#ffffff,#f4f4f4 50%,#c8c8c8);box-shadow:inset 0 1px 0 rgba(255,255,255,.9);clip-path:polygon(4px 0,calc(100% - 4px) 0,100% 4px,100% calc(100% - 3px),calc(100% - 3px) 100%,3px 100%,0 calc(100% - 3px),0 4px)"><div class="t" style="left:0;width:69px;text-align:center;top:3px;font-size:10px;color:#101040;letter-spacing:0.2px">Rotate1FineIn</div></div><div class="a" style="left:1343px;top:848px;width:69px;height:150px;background:linear-gradient(170deg,#9a9a9a,#7c7c7c 60%,#666);border-left:1px solid #f0f0f0;border-radius:0 0 6px 6px;box-shadow:inset -1px -1px 0 #505050"></div><div class="a" style="left:1348px;top:854px;width:30px;height:110px;background:#5d5d5d"></div><div class="a" style="left:1361px;top:865px;width:4px;height:82px;background:#000;border-right:1px solid #fff;border-bottom:1px solid #fff"></div><div class="a" style="left:1350px;top:942px;width:24px;height:13px;background:#6880c8;border-top:1px solid #fff;border-left:1px solid #fff;border-right:1px solid #444;border-bottom:1px solid #444"></div><div class="a" style="left:1348px;top:965px;width:60px;height:29px;background:#7a7a7a;border:1px solid #d8d8d8;border-right-color:#9a9a9a;border-bottom-color:#9a9a9a"></div><div class="a" style="left:1352px;top:968px;width:41px;height:23px;background:#c8c8ff;border:2px solid #000;overflow:hidden"><div class="t" style="left:1px;top:2px;font-size:17.5px;letter-spacing:-0.7px;color:#000820">%0</div></div><div class="a" style="left:1396px;top:968px;width:2px;height:23px;background:#000"></div><div class="a" style="left:1400px;top:979px;border-left:3px solid transparent;border-right:3px solid transparent;border-top:3px solid #000"></div><div class="a" style="left:1423px;top:834px;width:69px;height:14px;background:linear-gradient(#ffffff,#f4f4f4 50%,#c8c8c8);box-shadow:inset 0 1px 0 rgba(255,255,255,.9);clip-path:polygon(4px 0,calc(100% - 4px) 0,100% 4px,100% calc(100% - 3px),calc(100% - 3px) 100%,3px 100%,0 calc(100% - 3px),0 4px)"><div class="t" style="left:0;width:69px;text-align:center;top:3px;font-size:10px;color:#101040;letter-spacing:0.2px">Rotate2</div></div><div class="a" style="left:1423px;top:848px;width:69px;height:150px;background:linear-gradient(170deg,#9a9a9a,#7c7c7c 60%,#666);border-left:1px solid #f0f0f0;border-radius:0 0 6px 6px;box-shadow:inset -1px -1px 0 #505050"></div><div class="a" style="left:1428px;top:854px;width:30px;height:110px;background:#5d5d5d"></div><div class="a" style="left:1441px;top:865px;width:4px;height:82px;background:#000;border-right:1px solid #fff;border-bottom:1px solid #fff"></div><div class="a" style="left:1430px;top:942px;width:24px;height:13px;background:#6880c8;border-top:1px solid #fff;border-left:1px solid #fff;border-right:1px solid #444;border-bottom:1px solid #444"></div><div class="a" style="left:1428px;top:965px;width:60px;height:29px;background:#7a7a7a;border:1px solid #d8d8d8;border-right-color:#9a9a9a;border-bottom-color:#9a9a9a"></div><div class="a" style="left:1432px;top:968px;width:41px;height:23px;background:#fff;border:2px solid #000;overflow:hidden"><div class="t" style="left:1px;top:2px;font-size:17.5px;letter-spacing:-0.7px;color:#000820">Stop</div></div><div class="a" style="left:1476px;top:968px;width:2px;height:23px;background:#000"></div><div class="a" style="left:1480px;top:979px;border-left:3px solid transparent;border-right:3px solid transparent;border-top:3px solid #000"></div><div class="a" style="left:1503px;top:834px;width:69px;height:14px;background:linear-gradient(#ffffff,#f4f4f4 50%,#c8c8c8);box-shadow:inset 0 1px 0 rgba(255,255,255,.9);clip-path:polygon(4px 0,calc(100% - 4px) 0,100% 4px,100% calc(100% - 3px),calc(100% - 3px) 100%,3px 100%,0 calc(100% - 3px),0 4px)"><div class="t" style="left:0;width:69px;text-align:center;top:3px;font-size:10px;color:#101040;letter-spacing:0.2px">Rotate2FineIn</div></div><div class="a" style="left:1503px;top:848px;width:69px;height:150px;background:linear-gradient(170deg,#9a9a9a,#7c7c7c 60%,#666);border-left:1px solid #f0f0f0;border-radius:0 0 6px 6px;box-shadow:inset -1px -1px 0 #505050"></div><div class="a" style="left:1508px;top:854px;width:30px;height:110px;background:#5d5d5d"></div><div class="a" style="left:1521px;top:865px;width:4px;height:82px;background:#000;border-right:1px solid #fff;border-bottom:1px solid #fff"></div><div class="a" style="left:1510px;top:942px;width:24px;height:13px;background:#6880c8;border-top:1px solid #fff;border-left:1px solid #fff;border-right:1px solid #444;border-bottom:1px solid #444"></div><div class="a" style="left:1508px;top:965px;width:60px;height:29px;background:#7a7a7a;border:1px solid #d8d8d8;border-right-color:#9a9a9a;border-bottom-color:#9a9a9a"></div><div class="a" style="left:1512px;top:968px;width:41px;height:23px;background:#c8c8ff;border:2px solid #000;overflow:hidden"><div class="t" style="left:1px;top:2px;font-size:17.5px;letter-spacing:-0.7px;color:#000820">%0</div></div><div class="a" style="left:1556px;top:968px;width:2px;height:23px;background:#000"></div><div class="a" style="left:1560px;top:979px;border-left:3px solid transparent;border-right:3px solid transparent;border-top:3px solid #000"></div><div class="a" style="left:1583px;top:834px;width:69px;height:14px;background:linear-gradient(#ffffff,#f4f4f4 50%,#c8c8c8);box-shadow:inset 0 1px 0 rgba(255,255,255,.9);clip-path:polygon(4px 0,calc(100% - 4px) 0,100% 4px,100% calc(100% - 3px),calc(100% - 3px) 100%,3px 100%,0 calc(100% - 3px),0 4px)"><div class="t" style="left:0;width:69px;text-align:center;top:3px;font-size:10px;color:#101040;letter-spacing:0.2px">Shutter</div></div><div class="a" style="left:1583px;top:848px;width:69px;height:150px;background:linear-gradient(170deg,#9a9a9a,#7c7c7c 60%,#666);border-left:1px solid #f0f0f0;border-radius:0 0 6px 6px;box-shadow:inset -1px -1px 0 #505050"></div><div class="a" style="left:1588px;top:854px;width:30px;height:110px;background:#5d5d5d"></div><div class="a" style="left:1601px;top:865px;width:4px;height:82px;background:#000;border-right:1px solid #fff;border-bottom:1px solid #fff"></div><div class="a" style="left:1590px;top:942px;width:24px;height:13px;background:#6880c8;border-top:1px solid #fff;border-left:1px solid #fff;border-right:1px solid #444;border-bottom:1px solid #444"></div><div class="a" style="left:1626px;top:854px;width:22px;height:20px;border-radius:5px;background:linear-gradient(#b8b8b8,#7a7a7a);border:1px solid #e8e8e8;border-right-color:#333;border-bottom-color:#333"><div class="t" style="left:0;width:20px;text-align:center;top:4px;font-size:10.5px;color:#101030">S</div></div><div class="a" style="left:1626px;top:874px;width:22px;height:20px;border-radius:5px;background:linear-gradient(#b8b8b8,#7a7a7a);border:1px solid #e8e8e8;border-right-color:#333;border-bottom-color:#333"><div class="t" style="left:0;width:20px;text-align:center;top:4px;font-size:10.5px;color:#101030">R</div></div><div class="a" style="left:1626px;top:894px;width:22px;height:20px;border-radius:5px;background:linear-gradient(#b8b8b8,#7a7a7a);border:1px solid #e8e8e8;border-right-color:#333;border-bottom-color:#333"><div class="t" style="left:0;width:20px;text-align:center;top:4px;font-size:10.5px;color:#101030">R</div></div><div class="a" style="left:1626px;top:914px;width:22px;height:20px;border-radius:5px;background:linear-gradient(#b8b8b8,#7a7a7a);border:1px solid #e8e8e8;border-right-color:#333;border-bottom-color:#333"><div class="t" style="left:0;width:20px;text-align:center;top:4px;font-size:10.5px;color:#101030">R</div></div><div class="a" style="left:1588px;top:965px;width:60px;height:29px;background:#7a7a7a;border:1px solid #d8d8d8;border-right-color:#9a9a9a;border-bottom-color:#9a9a9a"></div><div class="a" style="left:1592px;top:968px;width:41px;height:23px;background:#fff;border:2px solid #000;overflow:hidden"><div class="t" style="left:1px;top:2px;font-size:17.5px;letter-spacing:-0.7px;color:#000820">Close</div></div><div class="a" style="left:1636px;top:968px;width:2px;height:23px;background:#000"></div><div class="a" style="left:1640px;top:979px;border-left:3px solid transparent;border-right:3px solid transparent;border-top:3px solid #000"></div><div class="a" style="left:768px;top:1019px;width:69px;height:14px;background:linear-gradient(#ffffff,#f4f4f4 50%,#c8c8c8);box-shadow:inset 0 1px 0 rgba(255,255,255,.9);clip-path:polygon(4px 0,calc(100% - 4px) 0,100% 4px,100% calc(100% - 3px),calc(100% - 3px) 100%,3px 100%,0 calc(100% - 3px),0 4px)"><div class="t" style="left:0;width:69px;text-align:center;top:3px;font-size:10px;color:#101040;letter-spacing:0.2px">Focus</div></div><div class="a" style="left:768px;top:1033px;width:69px;height:150px;background:linear-gradient(170deg,#9a9a9a,#7c7c7c 60%,#666);border-left:1px solid #f0f0f0;border-radius:0 0 6px 6px;box-shadow:inset -1px -1px 0 #505050"></div><div class="a" style="left:773px;top:1039px;width:30px;height:110px;background:#5d5d5d"></div><div class="a" style="left:786px;top:1050px;width:4px;height:82px;background:#000;border-right:1px solid #fff;border-bottom:1px solid #fff"></div><div class="a" style="left:775px;top:1127px;width:24px;height:13px;background:#6880c8;border-top:1px solid #fff;border-left:1px solid #fff;border-right:1px solid #444;border-bottom:1px solid #444"></div><div class="a" style="left:773px;top:1150px;width:60px;height:29px;background:#7a7a7a;border:1px solid #d8d8d8;border-right-color:#9a9a9a;border-bottom-color:#9a9a9a"></div><div class="a" style="left:777px;top:1153px;width:41px;height:23px;background:#c8c8ff;border:2px solid #000;overflow:hidden"><div class="t" style="left:1px;top:2px;font-size:17.5px;letter-spacing:-0.7px;color:#000820">%0</div></div><div class="a" style="left:821px;top:1153px;width:2px;height:23px;background:#000"></div><div class="a" style="left:825px;top:1164px;border-left:3px solid transparent;border-right:3px solid transparent;border-top:3px solid #000"></div><div class="a" style="left:848px;top:1019px;width:69px;height:14px;background:linear-gradient(#ffffff,#f4f4f4 50%,#c8c8c8);box-shadow:inset 0 1px 0 rgba(255,255,255,.9);clip-path:polygon(4px 0,calc(100% - 4px) 0,100% 4px,100% calc(100% - 3px),calc(100% - 3px) 100%,3px 100%,0 calc(100% - 3px),0 4px)"><div class="t" style="left:0;width:69px;text-align:center;top:3px;font-size:10px;color:#101040;letter-spacing:0.2px">Iris</div></div><div class="a" style="left:848px;top:1033px;width:69px;height:150px;background:linear-gradient(170deg,#9a9a9a,#7c7c7c 60%,#666);border-left:1px solid #f0f0f0;border-radius:0 0 6px 6px;box-shadow:inset -1px -1px 0 #505050"></div><div class="a" style="left:853px;top:1039px;width:30px;height:110px;background:#5d5d5d"></div><div class="a" style="left:866px;top:1050px;width:4px;height:82px;background:#000;border-right:1px solid #fff;border-bottom:1px solid #fff"></div><div class="a" style="left:855px;top:1127px;width:24px;height:13px;background:#6880c8;border-top:1px solid #fff;border-left:1px solid #fff;border-right:1px solid #444;border-bottom:1px solid #444"></div><div class="a" style="left:891px;top:1039px;width:22px;height:20px;border-radius:5px;background:linear-gradient(#b8b8b8,#7a7a7a);border:1px solid #e8e8e8;border-right-color:#333;border-bottom-color:#333"><div class="t" style="left:0;width:20px;text-align:center;top:4px;font-size:10.5px;color:#101030">P</div></div><div class="a" style="left:891px;top:1059px;width:22px;height:20px;border-radius:5px;background:linear-gradient(#b8b8b8,#7a7a7a);border:1px solid #e8e8e8;border-right-color:#333;border-bottom-color:#333"><div class="t" style="left:0;width:20px;text-align:center;top:4px;font-size:10.5px;color:#101030">R</div></div><div class="a" style="left:891px;top:1079px;width:22px;height:20px;border-radius:5px;background:linear-gradient(#b8b8b8,#7a7a7a);border:1px solid #e8e8e8;border-right-color:#333;border-bottom-color:#333"><div class="t" style="left:0;width:20px;text-align:center;top:4px;font-size:10.5px;color:#101030">R</div></div><div class="a" style="left:891px;top:1099px;width:22px;height:20px;border-radius:5px;background:linear-gradient(#b8b8b8,#7a7a7a);border:1px solid #e8e8e8;border-right-color:#333;border-bottom-color:#333"><div class="t" style="left:0;width:20px;text-align:center;top:4px;font-size:10.5px;color:#101030">R</div></div><div class="a" style="left:853px;top:1150px;width:60px;height:29px;background:#7a7a7a;border:1px solid #d8d8d8;border-right-color:#9a9a9a;border-bottom-color:#9a9a9a"></div><div class="a" style="left:857px;top:1153px;width:41px;height:23px;background:#fff;border:2px solid #000;overflow:hidden"><div class="t" style="left:1px;top:2px;font-size:17.5px;letter-spacing:-0.7px;color:#000820">Close</div></div><div class="a" style="left:901px;top:1153px;width:2px;height:23px;background:#000"></div><div class="a" style="left:905px;top:1164px;border-left:3px solid transparent;border-right:3px solid transparent;border-top:3px solid #000"></div><div class="a" style="left:928px;top:1019px;width:69px;height:14px;background:linear-gradient(#ffffff,#f4f4f4 50%,#c8c8c8);box-shadow:inset 0 1px 0 rgba(255,255,255,.9);clip-path:polygon(4px 0,calc(100% - 4px) 0,100% 4px,100% calc(100% - 3px),calc(100% - 3px) 100%,3px 100%,0 calc(100% - 3px),0 4px)"><div class="t" style="left:0;width:69px;text-align:center;top:3px;font-size:10px;color:#101040;letter-spacing:0.2px">Macros</div></div><div class="a" style="left:928px;top:1033px;width:69px;height:150px;background:linear-gradient(170deg,#9a9a9a,#7c7c7c 60%,#666);border-left:1px solid #f0f0f0;border-radius:0 0 6px 6px;box-shadow:inset -1px -1px 0 #505050"></div><div class="a" style="left:933px;top:1039px;width:30px;height:110px;background:#5d5d5d"></div><div class="a" style="left:946px;top:1050px;width:4px;height:82px;background:#000;border-right:1px solid #fff;border-bottom:1px solid #fff"></div><div class="a" style="left:935px;top:1127px;width:24px;height:13px;background:#6880c8;border-top:1px solid #fff;border-left:1px solid #fff;border-right:1px solid #444;border-bottom:1px solid #444"></div><div class="a" style="left:971px;top:1039px;width:22px;height:20px;border-radius:5px;background:linear-gradient(#b8b8b8,#7a7a7a);border:1px solid #e8e8e8;border-right-color:#333;border-bottom-color:#333"><div class="t" style="left:0;width:20px;text-align:center;top:4px;font-size:10.5px;color:#101030">M</div></div><div class="a" style="left:971px;top:1059px;width:22px;height:20px;border-radius:5px;background:linear-gradient(#b8b8b8,#7a7a7a);border:1px solid #e8e8e8;border-right-color:#333;border-bottom-color:#333"><div class="t" style="left:0;width:20px;text-align:center;top:4px;font-size:10.5px;color:#101030">R</div></div><div class="a" style="left:933px;top:1150px;width:60px;height:29px;background:#7a7a7a;border:1px solid #d8d8d8;border-right-color:#9a9a9a;border-bottom-color:#9a9a9a"></div><div class="a" style="left:937px;top:1153px;width:41px;height:23px;background:#fff;border:2px solid #000;overflow:hidden"><div class="t" style="left:1px;top:2px;font-size:17.5px;letter-spacing:-0.7px;color:#000820">Track</div></div><div class="a" style="left:981px;top:1153px;width:2px;height:23px;background:#000"></div><div class="a" style="left:985px;top:1164px;border-left:3px solid transparent;border-right:3px solid transparent;border-top:3px solid #000"></div><div class="a" style="left:1008px;top:1019px;width:69px;height:14px;background:linear-gradient(#ffffff,#f4f4f4 50%,#c8c8c8);box-shadow:inset 0 1px 0 rgba(255,255,255,.9);clip-path:polygon(4px 0,calc(100% - 4px) 0,100% 4px,100% calc(100% - 3px),calc(100% - 3px) 100%,3px 100%,0 calc(100% - 3px),0 4px)"><div class="t" style="left:0;width:69px;text-align:center;top:3px;font-size:10px;color:#101040;letter-spacing:0.2px">MSpeed</div></div><div class="a" style="left:1008px;top:1033px;width:69px;height:150px;background:linear-gradient(170deg,#9a9a9a,#7c7c7c 60%,#666);border-left:1px solid #f0f0f0;border-radius:0 0 6px 6px;box-shadow:inset -1px -1px 0 #505050"></div><div class="a" style="left:1013px;top:1039px;width:30px;height:110px;background:#5d5d5d"></div><div class="a" style="left:1026px;top:1050px;width:4px;height:82px;background:#000;border-right:1px solid #fff;border-bottom:1px solid #fff"></div><div class="a" style="left:1015px;top:1127px;width:24px;height:13px;background:#6880c8;border-top:1px solid #fff;border-left:1px solid #fff;border-right:1px solid #444;border-bottom:1px solid #444"></div><div class="a" style="left:1013px;top:1150px;width:60px;height:29px;background:#7a7a7a;border:1px solid #d8d8d8;border-right-color:#9a9a9a;border-bottom-color:#9a9a9a"></div><div class="a" style="left:1017px;top:1153px;width:41px;height:23px;background:#fff;border:2px solid #000;overflow:hidden"><div class="t" style="left:1px;top:2px;font-size:17.5px;letter-spacing:-0.7px;color:#000820">Track</div></div><div class="a" style="left:1061px;top:1153px;width:2px;height:23px;background:#000"></div><div class="a" style="left:1065px;top:1164px;border-left:3px solid transparent;border-right:3px solid transparent;border-top:3px solid #000"></div><div class="a" style="left:1088px;top:1019px;width:69px;height:14px;background:linear-gradient(#ffffff,#f4f4f4 50%,#c8c8c8);box-shadow:inset 0 1px 0 rgba(255,255,255,.9);clip-path:polygon(4px 0,calc(100% - 4px) 0,100% 4px,100% calc(100% - 3px),calc(100% - 3px) 100%,3px 100%,0 calc(100% - 3px),0 4px)"><div class="t" style="left:0;width:69px;text-align:center;top:3px;font-size:10px;color:#101040;letter-spacing:0.2px">Gobo1</div></div><div class="a" style="left:1088px;top:1033px;width:69px;height:36px;background:linear-gradient(90deg,#a8a8a8,#7a7a7a 15%,#7a7a7a 85%,#555);clip-path:polygon(0 0,100% 0,100% calc(100% - 5px),calc(100% - 5px) 100%,5px 100%,0 calc(100% - 5px))"></div><div class="a" style="left:1093px;top:1040px;width:60px;height:29px;background:#7a7a7a;border:1px solid #d8d8d8;border-right-color:#9a9a9a;border-bottom-color:#9a9a9a"></div><div class="a" style="left:1097px;top:1043px;width:41px;height:23px;background:#000;border:1px solid #000;overflow:hidden"><div class="a" style="left:1px;top:1px;width:38px;height:20px;border-top:1px solid #808080;border-left:1px solid #808080"></div><svg class="a" style="left:9px;top:0px" width="22" height="22"><circle cx="11" cy="11" r="10" fill="#fafafa"/><path d="M8 4v14M11 3v15M14 4v14M5 5h12M5 16h12" stroke="#000" stroke-width=".9" stroke-dasharray="2 1.2"/><path d="M7 7v8M13 6v9" stroke="#999" stroke-width=".7"/></svg></div><div class="a" style="left:1141px;top:1043px;width:2px;height:23px;background:#000"></div><div class="a" style="left:1145px;top:1054px;border-left:3px solid transparent;border-right:3px solid transparent;border-top:3px solid #000"></div><div class="a" style="left:1168px;top:1019px;width:69px;height:14px;background:linear-gradient(#ffffff,#f4f4f4 50%,#c8c8c8);box-shadow:inset 0 1px 0 rgba(255,255,255,.9);clip-path:polygon(4px 0,calc(100% - 4px) 0,100% 4px,100% calc(100% - 3px),calc(100% - 3px) 100%,3px 100%,0 calc(100% - 3px),0 4px)"><div class="t" style="left:0;width:69px;text-align:center;top:3px;font-size:9.3px;color:#101040;letter-spacing:0.2px">Color2Functio</div></div><div class="a" style="left:1168px;top:1033px;width:69px;height:36px;background:linear-gradient(90deg,#a8a8a8,#7a7a7a 15%,#7a7a7a 85%,#555);clip-path:polygon(0 0,100% 0,100% calc(100% - 5px),calc(100% - 5px) 100%,5px 100%,0 calc(100% - 5px))"></div><div class="a" style="left:1173px;top:1040px;width:60px;height:29px;background:#7a7a7a;border:1px solid #d8d8d8;border-right-color:#9a9a9a;border-bottom-color:#9a9a9a"></div><div class="a" style="left:1177px;top:1043px;width:41px;height:23px;background:#fff;border:2px solid #000;overflow:hidden"><div class="t" style="left:1px;top:2px;font-size:17.5px;letter-spacing:-0.7px;color:#000820">Comb</div></div><div class="a" style="left:1221px;top:1043px;width:2px;height:23px;background:#000"></div><div class="a" style="left:1225px;top:1054px;border-left:3px solid transparent;border-right:3px solid transparent;border-top:3px solid #000"></div><div class="a" style="left:1248px;top:1019px;width:69px;height:14px;background:linear-gradient(#ffffff,#f4f4f4 50%,#c8c8c8);box-shadow:inset 0 1px 0 rgba(255,255,255,.9);clip-path:polygon(4px 0,calc(100% - 4px) 0,100% 4px,100% calc(100% - 3px),calc(100% - 3px) 100%,3px 100%,0 calc(100% - 3px),0 4px)"><div class="t" style="left:0;width:69px;text-align:center;top:3px;font-size:10px;color:#101040;letter-spacing:0.2px">Control</div></div><div class="a" style="left:1248px;top:1033px;width:69px;height:36px;background:linear-gradient(90deg,#a8a8a8,#7a7a7a 15%,#7a7a7a 85%,#555);clip-path:polygon(0 0,100% 0,100% calc(100% - 5px),calc(100% - 5px) 100%,5px 100%,0 calc(100% - 5px))"></div><div class="a" style="left:1253px;top:1040px;width:60px;height:29px;background:#7a7a7a;border:1px solid #d8d8d8;border-right-color:#9a9a9a;border-bottom-color:#9a9a9a"></div><div class="a" style="left:1257px;top:1043px;width:41px;height:23px;background:#fff;border:2px solid #000;overflow:hidden"><div class="t" style="left:1px;top:2px;font-size:17.5px;letter-spacing:-0.7px;color:#000820">Norm</div></div><div class="a" style="left:1301px;top:1043px;width:2px;height:23px;background:#000"></div><div class="a" style="left:1305px;top:1054px;border-left:3px solid transparent;border-right:3px solid transparent;border-top:3px solid #000"></div><div class="a" style="left:1088px;top:1079px;width:69px;height:14px;background:linear-gradient(#ffffff,#f4f4f4 50%,#c8c8c8);box-shadow:inset 0 1px 0 rgba(255,255,255,.9);clip-path:polygon(4px 0,calc(100% - 4px) 0,100% 4px,100% calc(100% - 3px),calc(100% - 3px) 100%,3px 100%,0 calc(100% - 3px),0 4px)"><div class="t" style="left:0;width:69px;text-align:center;top:3px;font-size:10px;color:#101040;letter-spacing:0.2px">Gobo2</div></div><div class="a" style="left:1088px;top:1093px;width:69px;height:36px;background:linear-gradient(90deg,#a8a8a8,#7a7a7a 15%,#7a7a7a 85%,#555);clip-path:polygon(0 0,100% 0,100% calc(100% - 5px),calc(100% - 5px) 100%,5px 100%,0 calc(100% - 5px))"></div><div class="a" style="left:1093px;top:1100px;width:60px;height:29px;background:#7a7a7a;border:1px solid #d8d8d8;border-right-color:#9a9a9a;border-bottom-color:#9a9a9a"></div><div class="a" style="left:1097px;top:1103px;width:41px;height:23px;background:#000;border:1px solid #000;overflow:hidden"><div class="a" style="left:1px;top:1px;width:38px;height:20px;border-top:1px solid #808080;border-left:1px solid #808080"></div><svg class="a" style="left:9px;top:0px" width="22" height="22"><circle cx="11" cy="11" r="10" fill="#fafafa"/><path d="M8 4v14M11 3v15M14 4v14M5 5h12M5 16h12" stroke="#000" stroke-width=".9" stroke-dasharray="2 1.2"/><path d="M7 7v8M13 6v9" stroke="#999" stroke-width=".7"/></svg></div><div class="a" style="left:1141px;top:1103px;width:2px;height:23px;background:#000"></div><div class="a" style="left:1145px;top:1114px;border-left:3px solid transparent;border-right:3px solid transparent;border-top:3px solid #000"></div><div class="a" style="left:1168px;top:1079px;width:69px;height:14px;background:linear-gradient(#ffffff,#f4f4f4 50%,#c8c8c8);box-shadow:inset 0 1px 0 rgba(255,255,255,.9);clip-path:polygon(4px 0,calc(100% - 4px) 0,100% 4px,100% calc(100% - 3px),calc(100% - 3px) 100%,3px 100%,0 calc(100% - 3px),0 4px)"><div class="t" style="left:0;width:69px;text-align:center;top:3px;font-size:9.3px;color:#101040;letter-spacing:0.2px">Gobo1Functio</div></div><div class="a" style="left:1168px;top:1093px;width:69px;height:36px;background:linear-gradient(90deg,#a8a8a8,#7a7a7a 15%,#7a7a7a 85%,#555);clip-path:polygon(0 0,100% 0,100% calc(100% - 5px),calc(100% - 5px) 100%,5px 100%,0 calc(100% - 5px))"></div><div class="a" style="left:1173px;top:1100px;width:60px;height:29px;background:#7a7a7a;border:1px solid #d8d8d8;border-right-color:#9a9a9a;border-bottom-color:#9a9a9a"></div><div class="a" style="left:1177px;top:1103px;width:41px;height:23px;background:#fff;border:2px solid #000;overflow:hidden"><div class="t" style="left:1px;top:2px;font-size:17.5px;letter-spacing:-0.7px;color:#000820">Index</div></div><div class="a" style="left:1221px;top:1103px;width:2px;height:23px;background:#000"></div><div class="a" style="left:1225px;top:1114px;border-left:3px solid transparent;border-right:3px solid transparent;border-top:3px solid #000"></div><div class="a" style="left:1088px;top:1139px;width:69px;height:14px;background:linear-gradient(#ffffff,#f4f4f4 50%,#c8c8c8);box-shadow:inset 0 1px 0 rgba(255,255,255,.9);clip-path:polygon(4px 0,calc(100% - 4px) 0,100% 4px,100% calc(100% - 3px),calc(100% - 3px) 100%,3px 100%,0 calc(100% - 3px),0 4px)"><div class="t" style="left:0;width:69px;text-align:center;top:3px;font-size:9.3px;color:#101040;letter-spacing:0.2px">Color1Functio</div></div><div class="a" style="left:1088px;top:1153px;width:69px;height:36px;background:linear-gradient(90deg,#a8a8a8,#7a7a7a 15%,#7a7a7a 85%,#555);clip-path:polygon(0 0,100% 0,100% calc(100% - 5px),calc(100% - 5px) 100%,5px 100%,0 calc(100% - 5px))"></div><div class="a" style="left:1093px;top:1160px;width:60px;height:29px;background:#7a7a7a;border:1px solid #d8d8d8;border-right-color:#9a9a9a;border-bottom-color:#9a9a9a"></div><div class="a" style="left:1097px;top:1163px;width:41px;height:23px;background:#fff;border:2px solid #000;overflow:hidden"><div class="t" style="left:1px;top:2px;font-size:17.5px;letter-spacing:-0.7px;color:#000820">Index</div></div><div class="a" style="left:1141px;top:1163px;width:2px;height:23px;background:#000"></div><div class="a" style="left:1145px;top:1174px;border-left:3px solid transparent;border-right:3px solid transparent;border-top:3px solid #000"></div><div class="a" style="left:1168px;top:1139px;width:69px;height:14px;background:linear-gradient(#ffffff,#f4f4f4 50%,#c8c8c8);box-shadow:inset 0 1px 0 rgba(255,255,255,.9);clip-path:polygon(4px 0,calc(100% - 4px) 0,100% 4px,100% calc(100% - 3px),calc(100% - 3px) 100%,3px 100%,0 calc(100% - 3px),0 4px)"><div class="t" style="left:0;width:69px;text-align:center;top:3px;font-size:9.3px;color:#101040;letter-spacing:0.2px">Gobo2Functio</div></div><div class="a" style="left:1168px;top:1153px;width:69px;height:36px;background:linear-gradient(90deg,#a8a8a8,#7a7a7a 15%,#7a7a7a 85%,#555);clip-path:polygon(0 0,100% 0,100% calc(100% - 5px),calc(100% - 5px) 100%,5px 100%,0 calc(100% - 5px))"></div><div class="a" style="left:1173px;top:1160px;width:60px;height:29px;background:#7a7a7a;border:1px solid #d8d8d8;border-right-color:#9a9a9a;border-bottom-color:#9a9a9a"></div><div class="a" style="left:1177px;top:1163px;width:41px;height:23px;background:#fff;border:2px solid #000;overflow:hidden"><div class="t" style="left:1px;top:2px;font-size:17.5px;letter-spacing:-0.7px;color:#000820">Index</div></div><div class="a" style="left:1221px;top:1163px;width:2px;height:23px;background:#000"></div><div class="a" style="left:1225px;top:1174px;border-left:3px solid transparent;border-right:3px solid transparent;border-top:3px solid #000"></div>
<div class="a" style="left:757px;top:1194px;width:908px;height:26px;background:#f0f0f0;border-bottom:1px solid #a0a0a0"></div>
<svg class="a" style="left:757px;top:1193px" width="380" height="27"><path d="M115 0 L120 25 L193 25 L198 0" fill="#f0f0f0" stroke="#000"/><path d="M198 0 L203 25 L273 25 L278 0" fill="#f0f0f0" stroke="#000"/><path d="M278 0 L283 25 L348 25 L353 0" fill="#f0f0f0" stroke="#000"/><path d="M2 0 L7 25 L110 25 L115 0" fill="#fff" stroke="#000"/></svg>
<div class="t" style="left:768px;top:1198px;font-size:17.5px;font-weight:bold">Parameters</div>
<div class="t" style="left:880px;top:1198px;font-size:17.5px">Fanning</div>
<div class="t" style="left:965px;top:1198px;font-size:17.5px">Chases</div>
<div class="t" style="left:1044px;top:1198px;font-size:17.5px">Effects</div>
<div class="a" style="left:1665px;top:819px;width:2px;height:405px;background:#c8c8c8"></div>


<!-- STATUS BAR -->
<div class="a" id="statusbar" style="left:0;top:1224px;width:1672px;height:61px;background:#f0f0f0;border-top:1px solid #a0a0a0">
</div>
<div class="a" style="left:4px;top:1229px;width:2px;height:48px;border-left:1px solid #a0a0a0;border-right:1px solid #fff"></div>
<div class="t" style="left:12px;top:1230px;font-size:16.5px;font-weight:bold">Press 'F1' for Help</div>
<div class="a" style="left:460px;top:1227px;width:1px;height:52px;background:#a0a0a0"></div>
<div class="a" style="left:465px;top:1229px;width:2px;height:48px;border-left:1px solid #fff;border-right:1px solid #a0a0a0"></div>
<div class="a" style="left:515px;top:1229px;width:457px;height:49px;border-top:1px solid #a0a0a0;border-bottom:1px solid #a0a0a0;border-right:1px solid #a0a0a0"></div>
<div class="t" style="left:472px;top:1246px;font-size:16.5px;font-weight:bold">BPM</div>
<div class="a" style="left:532px;top:1237px;width:85px;height:30px;background:#000;border-top:2px solid #808080;border-left:2px solid #808080"></div>
<div class="t" style="left:532px;width:85px;text-align:right;top:1240px;font-size:16.5px;font-weight:bold;color:#fff;font-family:'Liberation Serif'">30.0</div>
<div class="btn" style="left:617px;top:1237px;width:25px;height:15px"><div class="a" style="left:8px;top:4px;border-left:4px solid transparent;border-right:4px solid transparent;border-bottom:4px solid #000"></div></div>
<div class="btn" style="left:617px;top:1252px;width:25px;height:16px"><div class="a" style="left:8px;top:5px;border-left:4px solid transparent;border-right:4px solid transparent;border-top:4px solid #000"></div></div>
<div class="a" style="left:663px;top:1245px;width:15px;height:15px;border-radius:50%;background:#fff;border:1px solid #888"></div>
<div class="t" style="left:687px;top:1245px;font-size:16.5px">Auto</div>
<div class="a" style="left:746px;top:1245px;width:15px;height:15px;border-radius:50%;background:#fff;border:1px solid #888"></div>
<div class="t" style="left:770px;top:1245px;font-size:16.5px">MIDI</div>
<div class="a" style="left:820px;top:1245px;width:15px;height:15px;border-radius:50%;background:#fff;border:1px solid #888"><div class="a" style="left:3px;top:3px;width:7px;height:7px;border-radius:50%;background:#000"></div></div>
<div class="t" style="left:843px;top:1245px;font-size:16.5px">Manual(Ctrl)</div>
<div class="a" style="left:978px;top:1227px;width:1px;height:52px;background:#a0a0a0"></div>
<div class="a" style="left:983px;top:1229px;width:2px;height:48px;border-left:1px solid #fff;border-right:1px solid #a0a0a0"></div>
<div class="t" style="left:989px;top:1246px;font-size:17px;font-weight:bold">Windows</div>
<div class="a" style="left:1071px;top:1227px;width:85px;height:51px;border-left:1px solid #a0a0a0;border-top:1px solid #a0a0a0;border-right:1px solid #fff;border-bottom:1px solid #fff;background:#f7f7f7;"></div><svg class="a" style="left:1100px;top:1231px" width="22" height="22"><circle cx="11" cy="11" r="9.5" fill="#8a8a00" stroke="#ffff00" stroke-width="1.3"/><path d="M5 11 L11 5 L17 11 L11 17z" fill="#f0f0c0"/><path d="M11 2v19" stroke="#000" stroke-width="1.6"/><path d="M4 4l14 14" stroke="#ff0" stroke-width=".8"/></svg><div class="t" style="left:1071px;width:85px;text-align:center;top:1258px;font-size:17.5px">Fixture</div>
<div class="a" style="left:1156px;top:1227px;width:85px;height:51px;border-left:1px solid #a0a0a0;border-top:1px solid #a0a0a0;border-right:1px solid #fff;border-bottom:1px solid #fff;background:#f7f7f7;"></div><svg class="a" style="left:1184px;top:1232px" width="25" height="21"><rect width="25" height="21" fill="#7a0000"/><path d="M2 2.5h3M2 5.5h7M2 8.5h19M2 11.5h19M2 14.5h15M2 17.5h8" stroke="#00ff00" stroke-width=".9" stroke-dasharray="2 .6"/></svg><div class="t" style="left:1156px;width:85px;text-align:center;top:1258px;font-size:17.5px">Status</div>
<div class="a" style="left:1241px;top:1227px;width:85px;height:51px;border-left:1px solid #a0a0a0;border-top:1px solid #a0a0a0;border-right:1px solid #fff;border-bottom:1px solid #fff;background:#f7f7f7;"></div><svg class="a" style="left:1270px;top:1231px" width="24" height="22"><rect width="24" height="22" fill="#fff"/><rect x="3" y="1" width="4" height="4" fill="#800" stroke="#cc0" stroke-width=".5"/><rect x="8" y="1" width="15" height="4" fill="#0f0"/><path d="M1 7l3 1.5-3 1.5z M1 17l2.5-3 2.5 3z M1 21l2.5-3 2.5 3z" fill="#000"/><rect x="8" y="7" width="3" height="3" fill="#080"/><path d="M12 8h10M12 12h9M12 16h10M12 20h10" stroke="#000" stroke-dasharray="1.5 .8"/><circle cx="10" cy="12" r="1.8" fill="#00f"/><rect x="8" y="15" width="3" height="2" fill="#0a0"/><rect x="8" y="19" width="3" height="2" fill="#00f"/></svg><div class="t" style="left:1241px;width:85px;text-align:center;top:1258px;font-size:17.5px">Navigator</div>
<div class="a" style="left:1326px;top:1227px;width:85px;height:51px;border-left:1px solid #a0a0a0;border-top:1px solid #a0a0a0;border-right:1px solid #fff;border-bottom:1px solid #fff;background:#f7f7f7;"></div><svg class="a" style="left:1355px;top:1231px" width="23" height="22"><rect width="23" height="22" fill="#c0c0c0"/><path d="M7 2v16M14 2v16" stroke="#707070" stroke-width="1.5"/><path d="M6 2h3M13 2h3" stroke="#fff"/><rect x="5" y="16" width="4" height="3" fill="#00d000"/><rect x="12" y="16" width="4" height="3" fill="#00d000"/><rect x="5" y="20" width="2" height="2" fill="#e00"/><rect x="11" y="19" width="1" height="3" fill="#ff0"/></svg><div class="t" style="left:1326px;width:85px;text-align:center;top:1258px;font-size:17.5px">Master</div>
<div class="a" style="left:1411px;top:1227px;width:84px;height:51px;"></div><svg class="a" style="left:1438px;top:1230px" width="24" height="23"><rect width="24" height="23" fill="#b8b8b8"/><rect x="1" y="3" width="7" height="4" fill="#e00"/><rect x="9" y="3" width="7" height="4" fill="#080"/><rect x="17" y="3" width="6" height="4" fill="#080"/><rect x="1" y="8" width="7" height="4" fill="#0c0"/><rect x="9" y="8" width="7" height="4" fill="#ff0"/><rect x="17" y="8" width="6" height="4" fill="#888"/><rect x="1" y="12" width="7" height="4" fill="#00c"/><rect x="9" y="12" width="7" height="4" fill="#800"/><rect x="17" y="12" width="6" height="4" fill="#e00"/><rect x="1" y="16" width="7" height="4" fill="#00f"/><rect x="9" y="16" width="7" height="4" fill="#ff0"/><rect x="17" y="16" width="6" height="4" fill="#880"/><rect x="1" y="20" width="7" height="2" fill="#fff"/><rect x="9" y="20" width="7" height="2" fill="#0ff"/><rect x="17" y="20" width="6" height="2" fill="#ff0"/></svg><div class="t" style="left:1411px;width:84px;text-align:center;top:1258px;font-size:17.5px">Palette</div>
<div class="a" style="left:1495px;top:1227px;width:85px;height:51px;"></div><svg class="a" style="left:1522px;top:1230px" width="24" height="23"><rect width="24" height="23" fill="#c0c0c0"/><rect x="3" y="3" width="8" height="17" fill="#00f0f8"/><rect x="13" y="3" width="8" height="17" fill="#00f0f8"/><path d="M3 7h8M3 11h8M3 15h8M13 7h8M13 11h8M13 15h8" stroke="#808080"/><rect x="11" y="3" width="2" height="17" fill="#ff0"/><path d="M3 20h18" stroke="#ff0"/></svg><div class="t" style="left:1495px;width:85px;text-align:center;top:1258px;font-size:17.5px">Operator</div>
<div class="a" style="left:1580px;top:1227px;width:85px;height:51px;"></div><svg class="a" style="left:1608px;top:1230px" width="24" height="23"><rect width="24" height="23" fill="#c8c8c8"/><rect y="3" width="24" height="3" fill="#008080"/><rect y="5" width="24" height="1" fill="#080"/><rect x="0" y="6" width="24" height="11" fill="#800000"/><path d="M5 6v10M10 6v10M15 6v10M20 6v10" stroke="#d0d0d0" stroke-width="1.2"/><rect y="17" width="24" height="2" fill="#ccc"/><rect y="19" width="24" height="1.5" fill="#ff0"/><rect y="20.5" width="24" height="2.5" fill="#008080"/><path d="M2 1h6M13 1h8" stroke="#555" stroke-width="1.5"/></svg><div class="t" style="left:1580px;width:85px;text-align:center;top:1258px;font-size:17.5px">Theatre</div>


</body></html>
